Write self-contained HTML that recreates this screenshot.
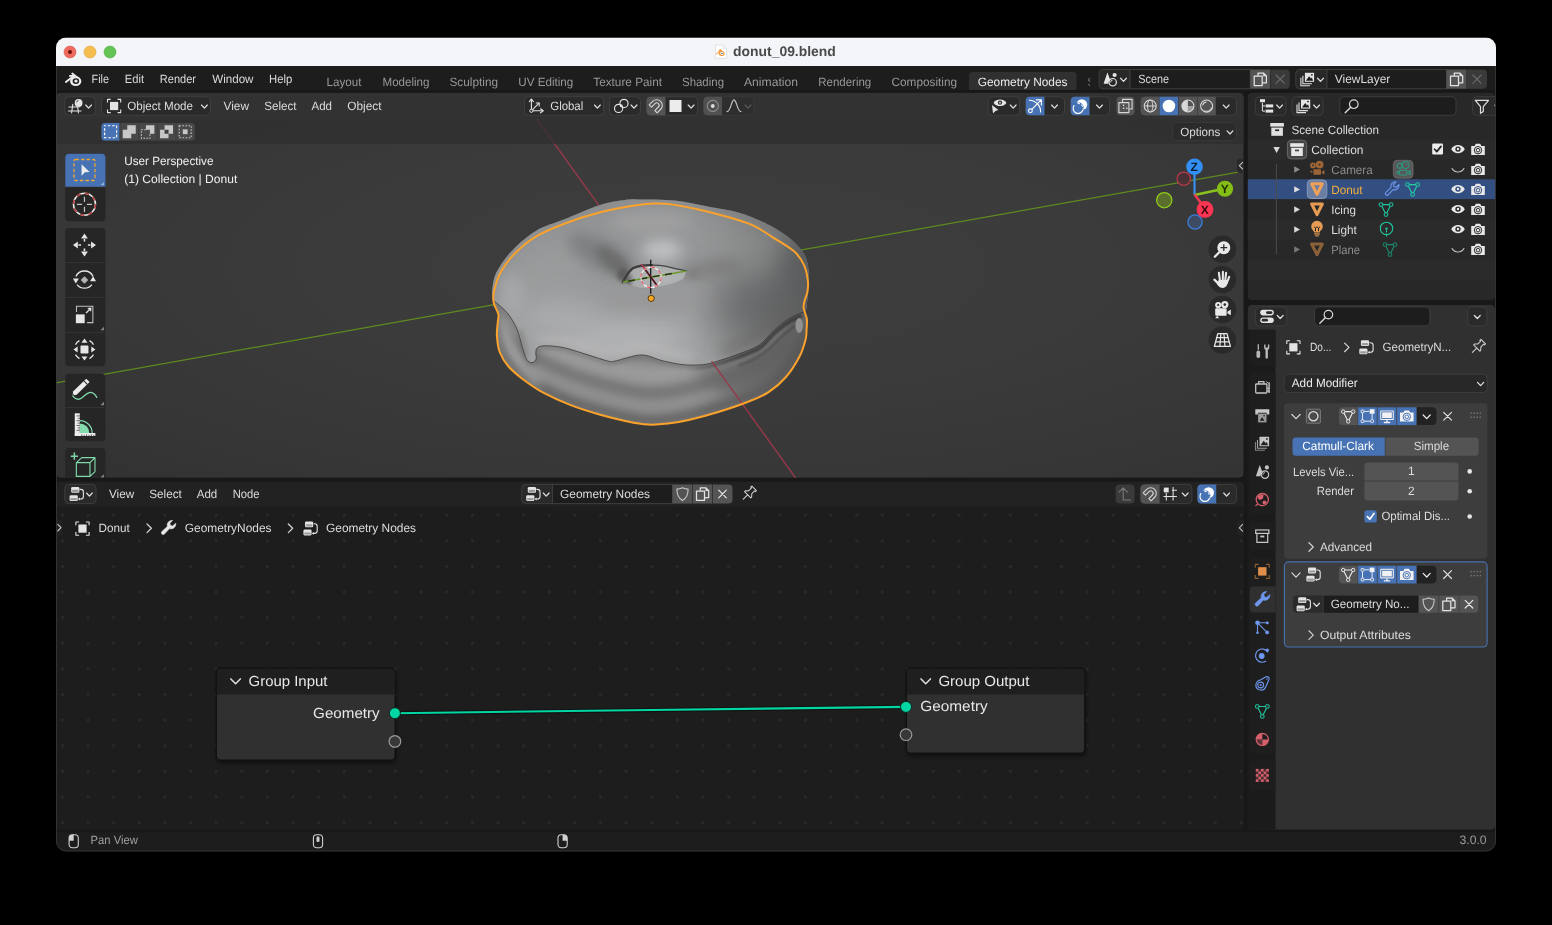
<!DOCTYPE html>
<html><head><meta charset="utf-8"><title>donut_09.blend</title>
<style>
html,body{margin:0;padding:0;background:#000;}
body{width:1552px;height:925px;overflow:hidden;}
svg{display:block;font-family:"Liberation Sans", sans-serif;will-change:transform;}
text{white-space:pre;}
</style></head>
<body>
<svg width="1552" height="925" viewBox="0 0 1552 925" text-rendering="geometricPrecision">
<defs>
<clipPath id="winclip"><rect x="56" y="37.5" width="1440" height="814.0" rx="10"/></clipPath>
<clipPath id="sclip"><rect x="1086" y="70" width="4.2" height="20"/></clipPath>
<clipPath id="vclip"><rect x="56" y="92.7" width="1187.7" height="385.1" rx="5"/></clipPath>
<radialGradient id="vgrad" cx="0.55" cy="0.45" r="0.75"><stop offset="0" stop-color="#3e3e3e"/><stop offset="0.45" stop-color="#3b3b3b"/><stop offset="0.8" stop-color="#363636"/><stop offset="1" stop-color="#323232"/></radialGradient>
<clipPath id="dclip"><path d="M654.0,203.5 C659.6,203.2 661.1,203.1 668.1,204.0 C675.1,204.9 686.8,207.0 696.2,209.0 C705.6,211.0 714.9,213.3 724.3,216.0 C733.7,218.7 744.2,221.5 752.4,225.1 C760.6,228.7 766.5,233.4 773.5,237.8 C780.5,242.2 789.5,247.1 794.6,251.8 C799.8,256.5 802.2,261.0 804.4,265.9 C806.6,270.8 807.4,276.9 807.9,281.3 C808.4,285.7 807.9,288.9 807.4,292.0 C806.9,295.1 805.5,297.1 804.9,299.7 C804.3,302.3 803.3,304.6 803.6,307.8 C803.9,311.0 806.3,315.1 806.8,318.6 C807.3,322.1 806.8,325.5 806.6,329.0 C806.4,332.5 806.8,334.9 805.6,339.6 C804.4,344.3 802.6,350.8 799.3,357.0 C796.0,363.2 791.1,371.1 786.0,377.0 C780.9,382.9 775.0,388.0 768.6,392.2 C762.2,396.4 755.7,398.7 747.4,402.0 C739.1,405.3 728.6,408.8 719.0,411.8 C709.4,414.8 698.3,417.8 689.8,419.8 C681.3,421.8 675.0,422.8 668.0,423.6 C661.0,424.4 654.8,425.0 648.0,424.6 C641.2,424.2 635.6,423.2 627.5,421.5 C619.4,419.8 608.8,417.2 599.4,414.5 C590.0,411.8 580.7,409.0 571.3,405.4 C561.9,401.8 551.4,397.1 543.2,392.7 C535.0,388.2 528.1,383.1 522.2,378.7 C516.4,374.2 511.9,370.4 508.1,366.0 C504.4,361.6 501.6,357.1 499.7,352.0 C497.8,346.9 497.2,340.1 496.9,335.1 C496.6,330.1 497.6,325.5 497.8,322.0 C498.0,318.5 499.0,317.2 498.3,314.0 C497.6,310.8 494.5,306.8 493.8,303.0 C493.1,299.2 492.8,296.4 494.0,291.2 C495.2,285.9 497.6,277.8 501.1,271.5 C504.6,265.2 509.2,259.1 515.1,253.2 C521.0,247.3 528.0,241.3 536.2,236.4 C544.4,231.5 553.8,227.7 564.3,223.7 C574.8,219.7 587.7,215.5 599.4,212.5 C611.1,209.5 625.5,207.0 634.6,205.5 C643.7,204.0 648.4,203.8 654.0,203.5 Z"/></clipPath>
<clipPath id="iclip"><path d="M492.6,300.0 C492.6,298.1 491.7,293.1 492.4,288.4 C493.1,283.6 493.6,277.8 496.9,271.5 C500.2,265.2 505.7,257.2 512.3,250.4 C518.8,243.6 527.5,235.9 536.2,230.7 C544.9,225.5 553.8,223.6 564.3,219.3 C574.8,215.1 589.1,208.4 599.4,205.2 C609.7,201.9 619.3,200.8 626.1,199.8 C632.9,198.8 631.9,199.3 640.0,199.4 C648.1,199.5 663.3,199.2 675.0,200.5 C686.7,201.8 699.4,204.9 710.0,206.9 C720.6,208.9 729.0,209.7 738.4,212.5 C747.8,215.3 758.3,219.7 766.5,223.7 C774.7,227.7 781.6,231.9 787.5,236.4 C793.4,240.9 798.2,245.8 801.6,250.4 C805.0,255.0 806.4,258.9 807.6,264.0 C808.8,269.1 808.6,276.0 808.6,281.3 C808.6,286.6 808.0,291.1 807.6,296.0 C807.2,300.9 806.3,308.5 806.0,311.0 C804.8,311.5 801.9,312.6 798.8,314.0 C795.7,315.4 791.7,316.9 787.5,319.7 C783.3,322.5 778.2,326.7 773.5,330.9 C768.8,335.1 765.2,341.1 759.4,345.0 C753.5,348.9 746.1,351.2 738.4,354.1 C730.7,357.0 719.4,360.7 713.1,362.5 C706.8,364.3 705.5,364.5 700.4,364.9 C695.2,365.2 688.8,365.4 682.2,364.6 C675.7,363.9 666.7,361.8 661.1,360.4 C655.5,359.0 652.3,356.9 648.6,356.0 C644.9,355.1 642.3,354.8 638.8,355.1 C635.3,355.4 631.7,356.6 627.5,357.6 C623.3,358.7 617.0,360.9 613.5,361.4 C610.0,361.9 611.2,361.9 606.5,360.7 C601.8,359.5 592.4,356.2 585.4,354.1 C578.4,352.0 570.9,349.2 564.3,347.8 C557.7,346.4 550.5,345.8 546.0,345.8 C541.5,345.8 539.3,346.4 537.6,347.6 C535.9,348.8 536.0,351.1 535.8,353.0 C535.6,354.9 536.8,357.4 536.2,359.0 C535.6,360.6 533.6,362.7 532.0,362.7 C530.4,362.7 528.0,361.7 526.4,359.0 C524.8,356.3 523.9,351.5 522.2,346.4 C520.6,341.2 518.9,333.5 516.5,328.1 C514.1,322.7 511.1,317.9 508.1,314.0 C505.1,310.1 501.1,306.9 498.5,304.6 C495.9,302.3 493.6,300.8 492.6,300.0 Z"/></clipPath>
<clipPath id="hclip"><path d="M622.9,282.1 C623.7,280.7 626.0,276.2 627.7,273.9 C629.4,271.6 630.6,269.7 632.9,268.3 C635.2,266.9 638.3,266.2 641.5,265.7 C644.7,265.2 648.0,265.0 651.9,265.1 C655.8,265.2 660.6,265.4 664.9,266.1 C669.2,266.8 674.3,268.4 677.9,269.2 C681.5,270.0 685.1,270.5 686.5,270.8 C685.9,272.2 685.5,277.1 682.6,279.4 C679.7,281.7 674.3,283.3 669.2,284.8 C664.1,286.3 657.0,287.9 651.9,288.4 C646.8,288.9 642.9,288.5 638.9,287.8 C634.9,287.1 630.7,285.3 628.0,284.4 C625.3,283.4 623.8,282.5 622.9,282.1 Z"/></clipPath>
<filter id="b1" x="-150%" y="-150%" width="400%" height="400%"><feGaussianBlur stdDeviation="0.7"/></filter>
<filter id="b1h" x="-150%" y="-150%" width="400%" height="400%"><feGaussianBlur stdDeviation="1.3"/></filter>
<filter id="b2" x="-150%" y="-150%" width="400%" height="400%"><feGaussianBlur stdDeviation="2"/></filter>
<filter id="b4" x="-150%" y="-150%" width="400%" height="400%"><feGaussianBlur stdDeviation="4"/></filter>
<filter id="b7" x="-150%" y="-150%" width="400%" height="400%"><feGaussianBlur stdDeviation="7"/></filter>
<filter id="b12" x="-150%" y="-150%" width="400%" height="400%"><feGaussianBlur stdDeviation="12"/></filter>
<filter id="b18" x="-150%" y="-150%" width="400%" height="400%"><feGaussianBlur stdDeviation="18"/></filter>
<linearGradient id="doughg" x1="0" y1="0" x2="0" y2="1"><stop offset="0" stop-color="#7c7c7c"/><stop offset="0.35" stop-color="#929292"/><stop offset="0.55" stop-color="#7f7f7f"/><stop offset="0.78" stop-color="#8e8e8e"/><stop offset="1" stop-color="#747474"/></linearGradient>
<linearGradient id="icingg" x1="0" y1="0" x2="0.15" y2="1"><stop offset="0" stop-color="#8f9091"/><stop offset="0.45" stop-color="#979899"/><stop offset="1" stop-color="#a3a4a5"/></linearGradient>
<linearGradient id="shg" gradientUnits="userSpaceOnUse" x1="684" y1="0" x2="740" y2="0"><stop offset="0" stop-color="#403e3e" stop-opacity="0"/><stop offset="1" stop-color="#403e3e" stop-opacity="1"/></linearGradient>
<linearGradient id="rdark" gradientUnits="userSpaceOnUse" x1="690" y1="0" x2="812" y2="0"><stop offset="0" stop-color="#000" stop-opacity="0"/><stop offset="1" stop-color="#000" stop-opacity="0.22"/></linearGradient>
<clipPath id="bodyclip"><path d="M654.0,203.5 C659.6,203.2 661.1,203.1 668.1,204.0 C675.1,204.9 686.8,207.0 696.2,209.0 C705.6,211.0 714.9,213.3 724.3,216.0 C733.7,218.7 744.2,221.5 752.4,225.1 C760.6,228.7 766.5,233.4 773.5,237.8 C780.5,242.2 789.5,247.1 794.6,251.8 C799.8,256.5 802.2,261.0 804.4,265.9 C806.6,270.8 807.4,276.9 807.9,281.3 C808.4,285.7 807.9,288.9 807.4,292.0 C806.9,295.1 805.5,297.1 804.9,299.7 C804.3,302.3 803.3,304.6 803.6,307.8 C803.9,311.0 806.3,315.1 806.8,318.6 C807.3,322.1 806.8,325.5 806.6,329.0 C806.4,332.5 806.8,334.9 805.6,339.6 C804.4,344.3 802.6,350.8 799.3,357.0 C796.0,363.2 791.1,371.1 786.0,377.0 C780.9,382.9 775.0,388.0 768.6,392.2 C762.2,396.4 755.7,398.7 747.4,402.0 C739.1,405.3 728.6,408.8 719.0,411.8 C709.4,414.8 698.3,417.8 689.8,419.8 C681.3,421.8 675.0,422.8 668.0,423.6 C661.0,424.4 654.8,425.0 648.0,424.6 C641.2,424.2 635.6,423.2 627.5,421.5 C619.4,419.8 608.8,417.2 599.4,414.5 C590.0,411.8 580.7,409.0 571.3,405.4 C561.9,401.8 551.4,397.1 543.2,392.7 C535.0,388.2 528.1,383.1 522.2,378.7 C516.4,374.2 511.9,370.4 508.1,366.0 C504.4,361.6 501.6,357.1 499.7,352.0 C497.8,346.9 497.2,340.1 496.9,335.1 C496.6,330.1 497.6,325.5 497.8,322.0 C498.0,318.5 499.0,317.2 498.3,314.0 C497.6,310.8 494.5,306.8 493.8,303.0 C493.1,299.2 492.8,296.4 494.0,291.2 C495.2,285.9 497.6,277.8 501.1,271.5 C504.6,265.2 509.2,259.1 515.1,253.2 C521.0,247.3 528.0,241.3 536.2,236.4 C544.4,231.5 553.8,227.7 564.3,223.7 C574.8,219.7 587.7,215.5 599.4,212.5 C611.1,209.5 625.5,207.0 634.6,205.5 C643.7,204.0 648.4,203.8 654.0,203.5 Z"/><path d="M492.6,300.0 C492.6,298.1 491.7,293.1 492.4,288.4 C493.1,283.6 493.6,277.8 496.9,271.5 C500.2,265.2 505.7,257.2 512.3,250.4 C518.8,243.6 527.5,235.9 536.2,230.7 C544.9,225.5 553.8,223.6 564.3,219.3 C574.8,215.1 589.1,208.4 599.4,205.2 C609.7,201.9 619.3,200.8 626.1,199.8 C632.9,198.8 631.9,199.3 640.0,199.4 C648.1,199.5 663.3,199.2 675.0,200.5 C686.7,201.8 699.4,204.9 710.0,206.9 C720.6,208.9 729.0,209.7 738.4,212.5 C747.8,215.3 758.3,219.7 766.5,223.7 C774.7,227.7 781.6,231.9 787.5,236.4 C793.4,240.9 798.2,245.8 801.6,250.4 C805.0,255.0 806.4,258.9 807.6,264.0 C808.8,269.1 808.6,276.0 808.6,281.3 C808.6,286.6 808.0,291.1 807.6,296.0 C807.2,300.9 806.3,308.5 806.0,311.0 C804.8,311.5 801.9,312.6 798.8,314.0 C795.7,315.4 791.7,316.9 787.5,319.7 C783.3,322.5 778.2,326.7 773.5,330.9 C768.8,335.1 765.2,341.1 759.4,345.0 C753.5,348.9 746.1,351.2 738.4,354.1 C730.7,357.0 719.4,360.7 713.1,362.5 C706.8,364.3 705.5,364.5 700.4,364.9 C695.2,365.2 688.8,365.4 682.2,364.6 C675.7,363.9 666.7,361.8 661.1,360.4 C655.5,359.0 652.3,356.9 648.6,356.0 C644.9,355.1 642.3,354.8 638.8,355.1 C635.3,355.4 631.7,356.6 627.5,357.6 C623.3,358.7 617.0,360.9 613.5,361.4 C610.0,361.9 611.2,361.9 606.5,360.7 C601.8,359.5 592.4,356.2 585.4,354.1 C578.4,352.0 570.9,349.2 564.3,347.8 C557.7,346.4 550.5,345.8 546.0,345.8 C541.5,345.8 539.3,346.4 537.6,347.6 C535.9,348.8 536.0,351.1 535.8,353.0 C535.6,354.9 536.8,357.4 536.2,359.0 C535.6,360.6 533.6,362.7 532.0,362.7 C530.4,362.7 528.0,361.7 526.4,359.0 C524.8,356.3 523.9,351.5 522.2,346.4 C520.6,341.2 518.9,333.5 516.5,328.1 C514.1,322.7 511.1,317.9 508.1,314.0 C505.1,310.1 501.1,306.9 498.5,304.6 C495.9,302.3 493.6,300.8 492.6,300.0 Z"/></clipPath>
<clipPath id="nclip"><rect x="56" y="481.5" width="1188" height="348.29999999999995" rx="5"/></clipPath>
<pattern id="dots" x="61.1" y="513.8" width="25.62" height="25.62" patternUnits="userSpaceOnUse"><rect x="0" y="0" width="2.6" height="2.6" rx="0.6" fill="#2b2b2b"/></pattern>
<filter id="nshadow" x="-10%" y="-10%" width="120%" height="130%"><feGaussianBlur stdDeviation="2.5"/></filter>
<clipPath id="oclip"><rect x="1247.6" y="92.7" width="247.60000000000014" height="207.7" rx="5"/></clipPath>
<clipPath id="pclip"><rect x="1247.6" y="304.7" width="247.60000000000014" height="525.0999999999999" rx="5"/></clipPath>
</defs>
<rect width="1552" height="925" fill="#000"/>
<g clip-path="url(#winclip)">
<rect x="56.00" y="37.50" width="1440.00" height="814.00" fill="#181818" />
<rect x="56.00" y="37.50" width="1440.00" height="28.50" fill="#f3f5f8" />
<circle cx="70.00" cy="52.00" r="6.00" fill="#ee6a5f" stroke="#d8564c" stroke-width="0.6" />
<circle cx="70.00" cy="52.00" r="2.00" fill="#6d1008" />
<circle cx="90.00" cy="52.00" r="6.00" fill="#f5bd4f" stroke="#dea23a" stroke-width="0.6" />
<circle cx="110.00" cy="52.00" r="6.00" fill="#61c454" stroke="#4fac43" stroke-width="0.6" />
<text x="733.10" y="56.00" font-size="13.8" fill="#4a4a4a" font-weight="bold" textLength="102.70" lengthAdjust="spacingAndGlyphs" >donut_09.blend</text>
<path d="M715.5,45.0 h7.5 l3.5,3.5 v9.8 h-11 z" fill="#ffffff" stroke="#dcdde0" stroke-width="0.8"/>
<path d="M723,45.0 v3.5 h3.5" fill="#eceef0" stroke="#dcdde0" stroke-width="0.6"/>
<g transform="translate(720.6,52.8) scale(0.52)"><path d="M-7.6,2.2 L0.2,-3.9 L-3.6,-3.9 M-1.2,-6.3 L3.4,-2.6" stroke="#ef9a3d" stroke-width="2" fill="none" stroke-linecap="round"/><ellipse cx="2.2" cy="1.4" rx="5.6" ry="4.9" fill="#ef9a3d"/><ellipse cx="2.4" cy="1.3" rx="3.2" ry="2.8" fill="#fff"/><ellipse cx="2.5" cy="1.2" rx="1.7" ry="1.5" fill="#3f6db5"/></g>
<rect x="56.00" y="66.00" width="1440.00" height="24.00" fill="#1d1d1d" />
<g transform="translate(73.50,79.80) scale(1.0)" ><path d="M-7.6,2.2 L0.2,-3.9 L-3.6,-3.9 M-1.2,-6.3 L3.4,-2.6" stroke="#ececec" stroke-width="1.9" fill="none" stroke-linecap="round" stroke-linejoin="round"/><ellipse cx="2.2" cy="1.4" rx="5.6" ry="4.9" fill="#ececec"/><ellipse cx="2.4" cy="1.3" rx="3.3" ry="2.9" fill="#1d1d1d"/><ellipse cx="2.5" cy="1.2" rx="1.7" ry="1.55" fill="#ececec"/></g>
<text x="91.50" y="83.00" font-size="12" fill="#dcdcdc" textLength="17.50" lengthAdjust="spacingAndGlyphs" >File</text>
<text x="124.75" y="83.00" font-size="12" fill="#dcdcdc" textLength="19.25" lengthAdjust="spacingAndGlyphs" >Edit</text>
<text x="159.75" y="83.00" font-size="12" fill="#dcdcdc" textLength="36.25" lengthAdjust="spacingAndGlyphs" >Render</text>
<text x="212.25" y="83.00" font-size="12" fill="#dcdcdc" textLength="41.25" lengthAdjust="spacingAndGlyphs" >Window</text>
<text x="269.00" y="83.00" font-size="12" fill="#dcdcdc" textLength="23.25" lengthAdjust="spacingAndGlyphs" >Help</text>
<path d="M973.00,72.00 H1072.50 A4,4 0 0 1 1076.50,76.00 V90.00 H969.00 V76.00 A4,4 0 0 1 973.00,72.00 Z" fill="#303030" />
<text x="326.50" y="85.75" font-size="12" fill="#989898" textLength="35.00" lengthAdjust="spacingAndGlyphs" >Layout</text>
<text x="382.50" y="85.75" font-size="12" fill="#989898" textLength="47.00" lengthAdjust="spacingAndGlyphs" >Modeling</text>
<text x="449.50" y="85.75" font-size="12" fill="#989898" textLength="48.50" lengthAdjust="spacingAndGlyphs" >Sculpting</text>
<text x="518.25" y="85.75" font-size="12" fill="#989898" textLength="55.00" lengthAdjust="spacingAndGlyphs" >UV Editing</text>
<text x="593.25" y="85.75" font-size="12" fill="#989898" textLength="68.75" lengthAdjust="spacingAndGlyphs" >Texture Paint</text>
<text x="682.00" y="85.75" font-size="12" fill="#989898" textLength="42.00" lengthAdjust="spacingAndGlyphs" >Shading</text>
<text x="744.00" y="85.75" font-size="12" fill="#989898" textLength="54.00" lengthAdjust="spacingAndGlyphs" >Animation</text>
<text x="818.25" y="85.75" font-size="12" fill="#989898" textLength="53.00" lengthAdjust="spacingAndGlyphs" >Rendering</text>
<text x="891.50" y="85.75" font-size="12" fill="#989898" textLength="65.50" lengthAdjust="spacingAndGlyphs" >Compositing</text>
<text x="977.75" y="85.75" font-size="12" fill="#ececec" textLength="89.75" lengthAdjust="spacingAndGlyphs" >Geometry Nodes</text>
<text x="1087.20" y="85.75" font-size="12" fill="#777" clip-path="url(#sclip)">S</text>
<path d="M1103.00,69.50 H1130.00 V88.75 H1103.00 A4,4 0 0 1 1099.00,84.75 V73.50 A4,4 0 0 1 1103.00,69.50 Z" fill="#282828" stroke="#3d3d3d" stroke-width="1" />
<g transform="translate(1110.00,79.20) scale(1.0)" ><path d="M-6.4,4.6 L-2.6,-6.6 L0.2,0.6 A4.4,4.4 0 0 0 -1.8,4.6 Z" fill="#e4e4e4"/><circle cx="4.6" cy="-4.2" r="2.1" fill="#e4e4e4"/><circle cx="2.7" cy="3" r="3.7" fill="none" stroke="#e4e4e4" stroke-width="1.2"/><path d="M0.6,3.2 A2.2,2.2 0 0 1 2.6,0.9" fill="none" stroke="#e4e4e4" stroke-width="0.9"/></g>
<path d="M1120.60,78.25 L1123.50,81.35 L1126.40,78.25" fill="none" stroke="#e0e0e0" stroke-width="1.25" stroke-linecap="round" stroke-linejoin="round"/>
<rect x="1130.00" y="69.50" width="120.25" height="19.25" fill="#1d1d1d" stroke="#3d3d3d" stroke-width="1" />
<text x="1138.25" y="83.00" font-size="12" fill="#dcdcdc" textLength="30.75" lengthAdjust="spacingAndGlyphs" >Scene</text>
<rect x="1250.25" y="69.50" width="20.00" height="19.25" fill="#545454" />
<g transform="translate(1260.20,79.20) scale(1.0)" ><path d="M-2.2,-3.2 V-6.2 H3.2 L6.2,-3.2 V3.6 H2.2" fill="none" stroke="#e4e4e4" stroke-width="1.25" stroke-linejoin="round"/><path d="M3,-6.2 V-3 H6.2 Z" fill="#e4e4e4"/><path d="M-6,-3 H2 V6.3 H-6 Z" fill="none" stroke="#e4e4e4" stroke-width="1.25" stroke-linejoin="round"/></g>
<path d="M1270.75,69.50 H1285.75 A4,4 0 0 1 1289.75,73.50 V84.75 A4,4 0 0 1 1285.75,88.75 H1270.75 V69.50 Z" fill="#3a3a3a" />
<path d="M1276.00,75.00 L1284.40,83.40 M1284.40,75.00 L1276.00,83.40" stroke="#6a6a6a" stroke-width="1.1" fill="none" stroke-linecap="round"/>
<path d="M1299.75,69.50 H1327.00 V88.75 H1299.75 A4,4 0 0 1 1295.75,84.75 V73.50 A4,4 0 0 1 1299.75,69.50 Z" fill="#282828" stroke="#3d3d3d" stroke-width="1" />
<g transform="translate(1307.50,79.20) scale(1.0)" ><path d="M-6.6,-1.4 V6.6 H2.4" fill="none" stroke="#e4e4e4" stroke-width="1.1"/><path d="M-4.6,-3.4 V4.6 H4.4" fill="none" stroke="#e4e4e4" stroke-width="1.1"/><rect x="-2.6" y="-6.4" width="9.2" height="9" fill="#e4e4e4"/><path d="M-1.6,1.6 L1.6,-3 L3.4,-0.6 L4.4,-1.8 L5.6,1.6 Z" fill="#1d1d1d"/><circle cx="4.4" cy="-4.4" r="0.9" fill="#1d1d1d"/></g>
<path d="M1317.60,78.25 L1320.50,81.35 L1323.40,78.25" fill="none" stroke="#e0e0e0" stroke-width="1.25" stroke-linecap="round" stroke-linejoin="round"/>
<rect x="1327.00" y="69.50" width="119.50" height="19.25" fill="#1d1d1d" stroke="#3d3d3d" stroke-width="1" />
<text x="1334.75" y="83.00" font-size="12" fill="#dcdcdc" textLength="55.50" lengthAdjust="spacingAndGlyphs" >ViewLayer</text>
<rect x="1446.50" y="69.50" width="20.00" height="19.25" fill="#545454" />
<g transform="translate(1456.50,79.20) scale(1.0)" ><path d="M-2.2,-3.2 V-6.2 H3.2 L6.2,-3.2 V3.6 H2.2" fill="none" stroke="#e4e4e4" stroke-width="1.25" stroke-linejoin="round"/><path d="M3,-6.2 V-3 H6.2 Z" fill="#e4e4e4"/><path d="M-6,-3 H2 V6.3 H-6 Z" fill="none" stroke="#e4e4e4" stroke-width="1.25" stroke-linejoin="round"/></g>
<path d="M1467.00,69.50 H1483.00 A4,4 0 0 1 1487.00,73.50 V84.75 A4,4 0 0 1 1483.00,88.75 H1467.00 V69.50 Z" fill="#3a3a3a" />
<path d="M1472.80,75.00 L1481.20,83.40 M1481.20,75.00 L1472.80,83.40" stroke="#6a6a6a" stroke-width="1.1" fill="none" stroke-linecap="round"/>
<g clip-path="url(#vclip)">
<rect x="56.00" y="92.70" width="1187.70" height="385.10" fill="url(#vgrad)" />
<line x1="56.00" y1="382.84" x2="500.00" y2="303.68" stroke="#5f8a1f" stroke-width="1.3" />
<line x1="796.00" y1="250.90" x2="1244.00" y2="171.02" stroke="#5f8a1f" stroke-width="1.3" />
<line x1="536.50" y1="118.75" x2="600.50" y2="207.70" stroke="#94394a" stroke-width="1.4" />
<g clip-path="url(#dclip)">
<rect x="480.00" y="195.00" width="340.00" height="235.00" fill="#878787" />
<path d="M493.6,326.0 C494.7,329.7 497.8,342.0 500.3,348.0 C502.8,354.0 505.0,357.6 508.6,362.0 C512.2,366.4 516.3,370.2 522.0,374.7 C527.7,379.1 534.8,384.2 543.0,388.7 C551.2,393.1 561.7,397.8 571.0,401.4 C580.3,405.0 589.6,407.8 599.0,410.5 C608.4,413.2 619.3,415.8 627.5,417.5 C635.7,419.2 641.2,420.2 648.0,420.6 C654.8,421.0 661.2,420.5 668.0,419.6 C674.8,418.7 680.8,417.5 689.0,415.4 C697.2,413.3 707.7,410.1 717.0,407.0 C726.3,403.9 736.8,400.3 745.0,397.0 C753.2,393.7 760.3,391.2 766.5,387.0 C772.7,382.8 777.4,377.8 782.4,372.0 C787.4,366.2 792.6,358.7 796.4,352.0 C800.2,345.3 803.9,335.3 805.4,332.0" fill="none" stroke="#626262" stroke-width="11" filter="url(#b4)" stroke-opacity="0.9" stroke-linecap="round"/>
<path d="M495.9,311.0 C497.0,314.7 500.1,327.0 502.6,333.0 C505.1,339.0 507.6,342.6 510.9,347.0 C514.1,351.4 516.6,355.2 522.0,359.7 C527.4,364.1 534.8,369.2 543.0,373.7 C551.2,378.1 561.7,382.8 571.0,386.4 C580.3,390.0 589.6,392.8 599.0,395.5 C608.4,398.2 619.3,400.8 627.5,402.5 C635.7,404.2 641.2,405.2 648.0,405.6 C654.8,406.0 661.2,405.5 668.0,404.6 C674.8,403.7 680.8,402.5 689.0,400.4 C697.2,398.3 707.7,395.1 717.0,392.0 C726.3,388.9 736.8,385.3 745.0,382.0 C753.2,378.7 760.6,376.2 766.5,372.0 C772.4,367.8 775.5,362.8 780.1,357.0 C784.8,351.2 790.3,343.7 794.1,337.0 C798.0,330.3 801.6,320.3 803.1,317.0" fill="none" stroke="#979797" stroke-width="10" filter="url(#b4)" stroke-opacity="0.65" stroke-linecap="round"/>
<path d="M497.8,298.0 C498.9,301.7 502.0,314.0 504.5,320.0 C507.0,326.0 509.9,329.6 512.8,334.0 C515.7,338.4 517.0,342.2 522.0,346.7 C527.0,351.1 534.8,356.2 543.0,360.7 C551.2,365.1 561.7,369.8 571.0,373.4 C580.3,377.0 589.6,379.8 599.0,382.5 C608.4,385.2 619.3,387.8 627.5,389.5 C635.7,391.2 641.2,392.2 648.0,392.6 C654.8,393.0 661.2,392.5 668.0,391.6 C674.8,390.7 680.8,389.5 689.0,387.4 C697.2,385.3 707.7,382.1 717.0,379.0 C726.3,375.9 736.8,372.3 745.0,369.0 C753.2,365.7 761.0,363.2 766.5,359.0 C772.0,354.8 773.9,349.8 778.2,344.0 C782.5,338.2 788.4,330.7 792.2,324.0 C796.0,317.3 799.7,307.3 801.2,304.0" fill="none" stroke="#717171" stroke-width="10" filter="url(#b4)" stroke-opacity="0.8" stroke-linecap="round"/>
<path d="M500.5,280.0 C501.6,283.7 504.7,296.0 507.2,302.0 C509.7,308.0 513.0,311.6 515.5,316.0 C518.0,320.4 517.4,324.2 522.0,328.7 C526.6,333.1 534.8,338.2 543.0,342.7 C551.2,347.1 561.7,351.8 571.0,355.4 C580.3,359.0 589.6,361.8 599.0,364.5 C608.4,367.2 619.3,369.8 627.5,371.5 C635.7,373.2 641.2,374.2 648.0,374.6 C654.8,375.0 661.2,374.5 668.0,373.6 C674.8,372.7 680.8,371.5 689.0,369.4 C697.2,367.3 707.7,364.1 717.0,361.0 C726.3,357.9 736.8,354.3 745.0,351.0 C753.2,347.7 761.4,345.2 766.5,341.0 C771.6,336.8 771.7,331.8 775.5,326.0 C779.3,320.2 785.7,312.7 789.5,306.0 C793.3,299.3 797.0,289.3 798.5,286.0" fill="none" stroke="#9e9e9e" stroke-width="18" filter="url(#b4)" stroke-opacity="0.85" stroke-linecap="round"/>
<path d="M502,318 C506,345 520,368 540,384" fill="none" stroke="#a6a6a6" stroke-width="9" filter="url(#b4)" stroke-opacity="0.7"/>
<path d="M497,312 C498,340 504,356 514,370" fill="none" stroke="#7a7a7a" stroke-width="4" filter="url(#b2)" stroke-opacity="0.7"/>
<path d="M690,372 C735,366 775,344 806,318 L812,345 C800,372 770,392 730,398 Z" fill="#6e6e6e" filter="url(#b7)" fill-opacity="0.8"/>
<path d="M799.5,314.0 C797.5,314.9 791.8,316.9 787.5,319.7 C783.2,322.5 778.2,326.7 773.5,330.9 C768.8,335.1 765.2,341.1 759.4,345.0 C753.5,348.9 746.1,351.2 738.4,354.1 C730.7,357.0 719.4,360.7 713.1,362.5 C706.8,364.3 704.9,364.5 700.4,364.9 C695.9,365.3 688.4,365.0 686.0,365.0" fill="none" stroke="url(#shg)" stroke-width="3.8" filter="url(#b1h)" stroke-opacity="0.9" stroke-linecap="round" transform="translate(0.5,2.6)"/>
<path d="M800.0,316.0 C798.3,317.0 793.7,319.3 790.0,322.0 C786.3,324.7 782.0,328.3 778.0,332.0 C774.0,335.7 770.3,340.5 766.0,344.0 C761.7,347.5 756.7,350.5 752.0,353.0 C747.3,355.5 740.3,358.0 738.0,359.0" fill="none" stroke="#504e4e" stroke-width="2.4" filter="url(#b1h)" stroke-opacity="0.65" stroke-linecap="round" transform="translate(1.4,6.4)"/>
<path d="M806.0,311.0 C804.8,311.5 801.9,312.6 798.8,314.0 C795.7,315.4 791.7,316.9 787.5,319.7 C783.3,322.5 778.2,326.7 773.5,330.9 C768.8,335.1 765.2,341.1 759.4,345.0 C753.5,348.9 746.1,351.2 738.4,354.1 C730.7,357.0 719.4,360.7 713.1,362.5 C706.8,364.3 705.5,364.5 700.4,364.9 C695.2,365.2 688.8,365.4 682.2,364.6 C675.7,363.9 666.7,361.8 661.1,360.4 C655.5,359.0 652.3,356.9 648.6,356.0 C644.9,355.1 642.3,354.8 638.8,355.1 C635.3,355.4 631.7,356.6 627.5,357.6 C623.3,358.7 617.0,360.9 613.5,361.4 C610.0,361.9 611.2,361.9 606.5,360.7 C601.8,359.5 592.4,356.2 585.4,354.1 C578.4,352.0 570.9,349.2 564.3,347.8 C557.7,346.4 550.5,345.8 546.0,345.8 C541.5,345.8 539.3,346.4 537.6,347.6 C535.9,348.8 536.0,351.1 535.8,353.0 C535.6,354.9 536.8,357.4 536.2,359.0 C535.6,360.6 533.6,362.7 532.0,362.7 C530.4,362.7 528.0,361.7 526.4,359.0 C524.8,356.3 523.9,351.5 522.2,346.4 C520.6,341.2 518.9,333.5 516.5,328.1 C514.1,322.7 511.1,317.9 508.1,314.0 C505.1,310.1 501.1,306.9 498.5,304.6 C495.9,302.3 493.6,300.8 492.6,300.0" fill="none" stroke="#5a5a5a" stroke-width="3" filter="url(#b2)" stroke-opacity="0.55" transform="translate(0,1.5)"/>
</g>
<g clip-path="url(#iclip)">
<rect x="480.00" y="190.00" width="340.00" height="190.00" fill="url(#icingg)" />
<path d="M492.6,300.0 C492.6,298.1 491.7,293.1 492.4,288.4 C493.1,283.6 493.6,277.8 496.9,271.5 C500.2,265.2 505.7,257.2 512.3,250.4 C518.8,243.6 527.5,235.9 536.2,230.7 C544.9,225.5 553.8,223.6 564.3,219.3 C574.8,215.1 589.1,208.4 599.4,205.2 C609.7,201.9 619.3,200.8 626.1,199.8 C632.9,198.8 631.9,199.3 640.0,199.4 C648.1,199.5 663.3,199.2 675.0,200.5 C686.7,201.8 699.4,204.9 710.0,206.9 C720.6,208.9 729.0,209.7 738.4,212.5 C747.8,215.3 758.3,219.7 766.5,223.7 C774.7,227.7 781.6,231.9 787.5,236.4 C793.4,240.9 798.2,245.8 801.6,250.4 C805.0,255.0 806.4,258.9 807.6,264.0 C808.8,269.1 808.6,276.0 808.6,281.3 C808.6,286.6 808.0,291.1 807.6,296.0 C807.2,300.9 806.3,308.5 806.0,311.0" fill="none" stroke="#868788" stroke-width="9" filter="url(#b4)" stroke-opacity="0.6"/>
<ellipse cx="800" cy="285" rx="26" ry="52" fill="#6f7071" filter="url(#b12)" fill-opacity="0.9"/>
<ellipse cx="768" cy="308" rx="56" ry="38" fill="#747576" filter="url(#b18)" fill-opacity="0.95"/>
<ellipse cx="560" cy="262" rx="50" ry="16" fill="#a0a1a2" filter="url(#b12)" fill-opacity="0.45" transform="rotate(-24 560 262)"/>
<ellipse cx="735" cy="248" rx="46" ry="14" fill="#a0a1a2" filter="url(#b12)" fill-opacity="0.45" transform="rotate(20 735 248)"/>
<ellipse cx="600" cy="254" rx="36" ry="15" fill="#7a7b7c" filter="url(#b7)" fill-opacity="0.85" transform="rotate(28 600 254)"/>
<ellipse cx="614" cy="262" rx="22" ry="9" fill="#666666" filter="url(#b4)" fill-opacity="0.75" transform="rotate(40 614 262)"/>
<ellipse cx="623" cy="275" rx="6" ry="7" fill="#565656" filter="url(#b2)" fill-opacity="0.8"/>
<ellipse cx="712" cy="268" rx="30" ry="7" fill="#7f8081" filter="url(#b7)" fill-opacity="0.9" transform="rotate(-8 712 268)"/>
<ellipse cx="692" cy="274" rx="7" ry="5" fill="#767676" filter="url(#b4)" fill-opacity="0.8"/>
<ellipse cx="662" cy="250" rx="20" ry="11" fill="#c2c3c4" filter="url(#b7)" fill-opacity="0.95"/>
<ellipse cx="650" cy="222" rx="40" ry="10" fill="#a6a7a8" filter="url(#b7)" fill-opacity="0.7"/>
<ellipse cx="625" cy="338" rx="62" ry="15" fill="#b6b7b8" filter="url(#b12)" fill-opacity="0.95"/>
<ellipse cx="560" cy="318" rx="40" ry="18" fill="#aeafb0" filter="url(#b12)" fill-opacity="0.8"/>
<ellipse cx="512" cy="296" rx="12" ry="22" fill="#aaabac" filter="url(#b7)" fill-opacity="0.8"/>
<ellipse cx="655" cy="300" rx="55" ry="10" fill="#949596" filter="url(#b7)" fill-opacity="0.6"/>
<path d="M540.0,344.0 C544.0,344.2 556.7,344.2 564.3,345.5 C571.9,346.8 578.4,349.5 585.4,351.5 C592.4,353.5 599.5,357.0 606.5,357.5 C613.5,358.0 620.5,355.3 627.5,354.5 C634.5,353.7 641.5,351.9 648.6,352.5 C655.7,353.1 663.1,356.6 670.0,358.0 C676.9,359.4 686.7,360.5 690.0,361.0" fill="none" stroke="#bdbebf" stroke-width="6" filter="url(#b4)" stroke-opacity="0.7" stroke-linecap="round" transform="translate(0,-4.5)"/>
<path d="M520,330 L527,358" fill="none" stroke="#858585" stroke-width="5" filter="url(#b2)" stroke-opacity="0.8"/>
<path d="M720,352 C750,344 775,322 798,306" fill="none" stroke="#757677" stroke-width="12" filter="url(#b7)" stroke-opacity="0.8"/>
</g>
<ellipse cx="799.2" cy="325.4" rx="3.7" ry="7.4" fill="#b4b5b5" filter="url(#b1)"/>
<path d="M806.0,311.0 C804.8,311.5 801.9,312.6 798.8,314.0 C795.7,315.4 791.7,316.9 787.5,319.7 C783.3,322.5 778.2,326.7 773.5,330.9 C768.8,335.1 765.2,341.1 759.4,345.0 C753.5,348.9 746.1,351.2 738.4,354.1 C730.7,357.0 719.4,360.7 713.1,362.5 C706.8,364.3 705.5,364.5 700.4,364.9 C695.2,365.2 688.8,365.4 682.2,364.6 C675.7,363.9 666.7,361.8 661.1,360.4 C655.5,359.0 652.3,356.9 648.6,356.0 C644.9,355.1 642.3,354.8 638.8,355.1 C635.3,355.4 631.7,356.6 627.5,357.6 C623.3,358.7 617.0,360.9 613.5,361.4 C610.0,361.9 611.2,361.9 606.5,360.7 C601.8,359.5 592.4,356.2 585.4,354.1 C578.4,352.0 570.9,349.2 564.3,347.8 C557.7,346.4 550.5,345.8 546.0,345.8 C541.5,345.8 539.3,346.4 537.6,347.6 C535.9,348.8 536.0,351.1 535.8,353.0 C535.6,354.9 536.8,357.4 536.2,359.0 C535.6,360.6 533.6,362.7 532.0,362.7 C530.4,362.7 528.0,361.7 526.4,359.0 C524.8,356.3 523.9,351.5 522.2,346.4 C520.6,341.2 518.9,333.5 516.5,328.1 C514.1,322.7 511.1,317.9 508.1,314.0 C505.1,310.1 501.1,306.9 498.5,304.6 C495.9,302.3 493.6,300.8 492.6,300.0" fill="none" stroke="#403e3e" stroke-width="1.0" stroke-linejoin="round" stroke-opacity="0.85"/>
<rect x="640.00" y="195.00" width="175.00" height="235.00" fill="url(#rdark)" clip-path="url(#bodyclip)"/>
<path d="M622.9,282.1 C623.7,280.7 626.0,276.2 627.7,273.9 C629.4,271.6 630.6,269.7 632.9,268.3 C635.2,266.9 638.3,266.2 641.5,265.7 C644.7,265.2 648.0,265.0 651.9,265.1 C655.8,265.2 660.6,265.4 664.9,266.1 C669.2,266.8 674.3,268.4 677.9,269.2 C681.5,270.0 685.1,270.5 686.5,270.8 C685.9,272.2 685.5,277.1 682.6,279.4 C679.7,281.7 674.3,283.3 669.2,284.8 C664.1,286.3 657.0,287.9 651.9,288.4 C646.8,288.9 642.9,288.5 638.9,287.8 C634.9,287.1 630.7,285.3 628.0,284.4 C625.3,283.4 623.8,282.5 622.9,282.1 Z" fill="#acadae" />
<g clip-path="url(#hclip)">
<ellipse cx="625" cy="280" rx="7" ry="8" fill="#6a6a6a" filter="url(#b2)"/>
<ellipse cx="662" cy="277" rx="20" ry="6" fill="#b4b5b6" filter="url(#b4)"/>
</g>
<path d="M622.9,282.1 C623.7,280.7 626.0,276.2 627.7,273.9 C629.4,271.6 630.6,269.7 632.9,268.3 C635.2,266.9 638.3,266.2 641.5,265.7 C644.7,265.2 648.0,265.0 651.9,265.1 C655.8,265.2 660.6,265.4 664.9,266.1 C669.2,266.8 674.3,268.4 677.9,269.2 C681.5,270.0 685.1,270.5 686.5,270.8" fill="none" stroke="#444" stroke-width="1.2" stroke-linecap="round"/>
<path d="M622.9,282.1 C623.7,280.7 626.0,276.2 627.7,273.9 C629.4,271.6 630.6,269.7 632.9,268.3 C635.2,266.9 638.3,266.2 641.5,265.7 C644.7,265.2 650.2,265.2 651.9,265.1" fill="none" stroke="#3e3e3e" stroke-width="2.4" stroke-linecap="round" filter="url(#b1)"/>
<path d="M686.5,270.8 C685.9,272.2 685.5,277.1 682.6,279.4 C679.7,281.7 674.3,283.3 669.2,284.8 C664.1,286.3 657.0,287.9 651.9,288.4 C646.8,288.9 642.9,288.5 638.9,287.8 C634.9,287.1 630.7,285.3 628.0,284.4 C625.3,283.4 623.8,282.5 622.9,282.1" fill="none" stroke="#8a8a8a" stroke-width="0.8" stroke-opacity="0.6"/>
<line x1="622.90" y1="282.10" x2="686.50" y2="270.90" stroke="#6d9c2c" stroke-width="1.5" />
<line x1="628.00" y1="281.20" x2="672.00" y2="273.40" stroke="#18230a" stroke-width="1.5" stroke-dasharray="7 5.5" stroke-opacity="0.85"/>
<line x1="711.70" y1="361.40" x2="796.00" y2="478.50" stroke="#94394a" stroke-width="1.4" />
<path d="M654.0,203.5 C659.6,203.2 661.1,203.1 668.1,204.0 C675.1,204.9 686.8,207.0 696.2,209.0 C705.6,211.0 714.9,213.3 724.3,216.0 C733.7,218.7 744.2,221.5 752.4,225.1 C760.6,228.7 766.5,233.4 773.5,237.8 C780.5,242.2 789.5,247.1 794.6,251.8 C799.8,256.5 802.2,261.0 804.4,265.9 C806.6,270.8 807.4,276.9 807.9,281.3 C808.4,285.7 807.9,288.9 807.4,292.0 C806.9,295.1 805.5,297.1 804.9,299.7 C804.3,302.3 803.3,304.6 803.6,307.8 C803.9,311.0 806.3,315.1 806.8,318.6 C807.3,322.1 806.8,325.5 806.6,329.0 C806.4,332.5 806.8,334.9 805.6,339.6 C804.4,344.3 802.6,350.8 799.3,357.0 C796.0,363.2 791.1,371.1 786.0,377.0 C780.9,382.9 775.0,388.0 768.6,392.2 C762.2,396.4 755.7,398.7 747.4,402.0 C739.1,405.3 728.6,408.8 719.0,411.8 C709.4,414.8 698.3,417.8 689.8,419.8 C681.3,421.8 675.0,422.8 668.0,423.6 C661.0,424.4 654.8,425.0 648.0,424.6 C641.2,424.2 635.6,423.2 627.5,421.5 C619.4,419.8 608.8,417.2 599.4,414.5 C590.0,411.8 580.7,409.0 571.3,405.4 C561.9,401.8 551.4,397.1 543.2,392.7 C535.0,388.2 528.1,383.1 522.2,378.7 C516.4,374.2 511.9,370.4 508.1,366.0 C504.4,361.6 501.6,357.1 499.7,352.0 C497.8,346.9 497.2,340.1 496.9,335.1 C496.6,330.1 497.6,325.5 497.8,322.0 C498.0,318.5 499.0,317.2 498.3,314.0 C497.6,310.8 494.5,306.8 493.8,303.0 C493.1,299.2 492.8,296.4 494.0,291.2 C495.2,285.9 497.6,277.8 501.1,271.5 C504.6,265.2 509.2,259.1 515.1,253.2 C521.0,247.3 528.0,241.3 536.2,236.4 C544.4,231.5 553.8,227.7 564.3,223.7 C574.8,219.7 587.7,215.5 599.4,212.5 C611.1,209.5 625.5,207.0 634.6,205.5 C643.7,204.0 648.4,203.8 654.0,203.5 Z" fill="none" stroke="#fba22c" stroke-width="2.0" stroke-linejoin="round"/>
<line x1="650.70" y1="259.70" x2="650.70" y2="293.80" stroke="#1a1a1a" stroke-width="1.3" />
<line x1="641.30" y1="264.30" x2="657.60" y2="286.20" stroke="#a8384a" stroke-width="1.6" />
<line x1="644.60" y1="268.80" x2="657.60" y2="286.20" stroke="#2a0d12" stroke-width="1.4" stroke-opacity="0.85"/>
<circle cx="651.00" cy="277.30" r="10.20" fill="none" stroke="#f0f0f0" stroke-width="1.1" />
<circle cx="651.00" cy="277.30" r="10.20" fill="none" stroke="#e0505a" stroke-width="1.1" stroke-dasharray="4 4"/>
<circle cx="651.20" cy="298.40" r="3.10" fill="#f5a623" stroke="#4a3008" stroke-width="0.9" />
<rect x="56.00" y="92.70" width="1187.70" height="26.80" fill="#323232" fill-opacity="0.96"/>
<rect x="56.00" y="119.50" width="1187.70" height="24.50" fill="#2f2f2f" fill-opacity="0.75"/>
<rect x="64.75" y="96.75" width="30.50" height="18.50" fill="#2a2a2a" rx="4" stroke="#3f3f3f" stroke-width="1" />
<g transform="translate(76.00,106.00) scale(1.0)" ><path d="M-7,1 H3 M-7.6,5 H5 M-3.2,-1.8 L-4.4,7 M1.8,2 L2.4,7" stroke="#e4e4e4" stroke-width="1.1" fill="none" stroke-linecap="round"/><circle cx="2.6" cy="-3" r="3.9" fill="#e4e4e4"/><path d="M0.4,-3.6 A2.4,2.4 0 0 1 2.4,-5.4" stroke="#303030" stroke-width="0.9" fill="none"/></g>
<path d="M85.70,105.05 L88.60,108.15 L91.50,105.05" fill="none" stroke="#e0e0e0" stroke-width="1.25" stroke-linecap="round" stroke-linejoin="round"/>
<rect x="101.50" y="96.75" width="109.00" height="18.50" fill="#2a2a2a" rx="4" stroke="#3f3f3f" stroke-width="1" />
<g transform="translate(114.10,106.00) scale(1.0)" ><rect x="-4.1" y="-4.1" width="8.2" height="8.2" fill="#e4e4e4"/><path d="M-6.6,-3.4 V-6.6 H-3.4 M3.4,-6.6 H6.6 V-3.4 M6.6,3.4 V6.6 H3.4 M-3.4,6.6 H-6.6 V3.4" stroke="#e4e4e4" stroke-width="1.1" fill="none" stroke-linejoin="round"/></g>
<text x="127.25" y="109.60" font-size="12" fill="#dcdcdc" textLength="65.75" lengthAdjust="spacingAndGlyphs" >Object Mode</text>
<path d="M201.50,105.05 L204.40,108.15 L207.30,105.05" fill="none" stroke="#e0e0e0" stroke-width="1.25" stroke-linecap="round" stroke-linejoin="round"/>
<text x="223.50" y="109.60" font-size="12" fill="#dcdcdc" textLength="25.50" lengthAdjust="spacingAndGlyphs" >View</text>
<text x="264.25" y="109.60" font-size="12" fill="#dcdcdc" textLength="32.25" lengthAdjust="spacingAndGlyphs" >Select</text>
<text x="311.50" y="109.60" font-size="12" fill="#dcdcdc" textLength="20.50" lengthAdjust="spacingAndGlyphs" >Add</text>
<text x="347.25" y="109.60" font-size="12" fill="#dcdcdc" textLength="34.25" lengthAdjust="spacingAndGlyphs" >Object</text>
<rect x="524.50" y="96.75" width="79.00" height="18.50" fill="#2a2a2a" rx="4" stroke="#3f3f3f" stroke-width="1" />
<g transform="translate(536.00,106.00) scale(1.0)" ><path d="M-4.6,4.8 V-6.4 M-4.6,4.8 H6.8 M-4.6,4.8 L3,-2.8" stroke="#e4e4e4" stroke-width="1.1" fill="none" stroke-linecap="round"/><path d="M-6.6,-4.4 L-4.6,-7 L-2.6,-4.4 M4.6,2.8 L7.2,4.8 L4.6,6.8 M0.2,-3 H3.2 V0" stroke="#e4e4e4" stroke-width="1.1" fill="none" stroke-linecap="round" stroke-linejoin="round"/><circle cx="-4.6" cy="4.8" r="1.6" fill="#2b2b2b" stroke="#e4e4e4" stroke-width="1"/></g>
<text x="550.25" y="109.60" font-size="12" fill="#dcdcdc" textLength="33.00" lengthAdjust="spacingAndGlyphs" >Global</text>
<path d="M594.50,105.05 L597.40,108.15 L600.30,105.05" fill="none" stroke="#e0e0e0" stroke-width="1.25" stroke-linecap="round" stroke-linejoin="round"/>
<rect x="609.50" y="96.75" width="31.00" height="18.50" fill="#2a2a2a" rx="4" stroke="#3f3f3f" stroke-width="1" />
<g transform="translate(621.20,106.00) scale(1.0)" ><circle cx="-2.6" cy="2.4" r="4.1" fill="none" stroke="#e4e4e4" stroke-width="1.15"/><circle cx="2.8" cy="-2.6" r="4.1" fill="none" stroke="#e4e4e4" stroke-width="1.15"/><circle cx="0.1" cy="-0.1" r="1.3" fill="#e4e4e4"/></g>
<path d="M631.10,105.05 L634.00,108.15 L636.90,105.05" fill="none" stroke="#e0e0e0" stroke-width="1.25" stroke-linecap="round" stroke-linejoin="round"/>
<rect x="646.50" y="96.75" width="51.00" height="18.50" fill="#2a2a2a" rx="4" stroke="#3f3f3f" stroke-width="1" />
<path d="M650.50,96.75 H665.50 V115.25 H650.50 A4,4 0 0 1 646.50,111.25 V100.75 A4,4 0 0 1 650.50,96.75 Z" fill="#545454" />
<g transform="translate(656.00,106.00) scale(1.0)" ><path d="M-5.6,4.6 V-0.4 A5.6,5.6 0 0 1 5.6,-0.4 V4.6 H2.4 V-0.4 A2.4,2.4 0 0 0 -2.4,-0.4 V4.6 Z" fill="none" stroke="#d6d6d6" stroke-width="1.1" stroke-linejoin="round" transform="rotate(45) translate(0,-0.6)"/></g>
<rect x="669.50" y="100.00" width="12.00" height="12.00" fill="#ececec" />
<path d="M688.20,105.05 L691.10,108.15 L694.00,105.05" fill="none" stroke="#e0e0e0" stroke-width="1.25" stroke-linecap="round" stroke-linejoin="round"/>
<rect x="703.50" y="96.75" width="50.50" height="18.50" fill="#2e2e2e" rx="4" stroke="#383838" stroke-width="1" />
<path d="M707.50,96.75 H722.00 V115.25 H707.50 A4,4 0 0 1 703.50,111.25 V100.75 A4,4 0 0 1 707.50,96.75 Z" fill="#505050" />
<g transform="translate(712.80,106.00) scale(1.0)" ><circle cx="0" cy="0" r="5.6" fill="none" stroke="#8e8e8e" stroke-width="1.1"/><circle cx="0" cy="0" r="1.9" fill="#dcdcdc"/></g>
<g transform="translate(734.00,106.00) scale(1.0)" ><path d="M-7,5.6 C-3,5.6 -2.8,-6.2 0,-6.2 C2.8,-6.2 3,5.6 7,5.6" fill="none" stroke="#c4c4c4" stroke-width="1.15" stroke-linecap="round"/></g>
<path d="M745.10,105.05 L748.00,108.15 L750.90,105.05" fill="none" stroke="#5a5a5a" stroke-width="1.25" stroke-linecap="round" stroke-linejoin="round"/>
<rect x="988.25" y="96.75" width="31.25" height="18.50" fill="#2a2a2a" rx="4" stroke="#3f3f3f" stroke-width="1" />
<g transform="translate(999.00,105.50) scale(1.0)" ><path d="M-7,-0.4 L-6,8 L-3.6,5.6 L-0.6,4.6 Z" fill="#e4e4e4"/><path d="M-5.4,-2.6 C-2.6,-7 4.6,-7 7.4,-2.6 C4.6,1.6 -2.6,1.6 -5.4,-2.6 Z" fill="#e4e4e4"/><circle cx="1" cy="-2.8" r="2.1" fill="#2b2b2b"/><circle cx="1" cy="-2.8" r="0.9" fill="#e4e4e4"/></g>
<path d="M1010.30,105.05 L1013.20,108.15 L1016.10,105.05" fill="none" stroke="#e0e0e0" stroke-width="1.25" stroke-linecap="round" stroke-linejoin="round"/>
<rect x="1025.75" y="96.75" width="38.75" height="18.50" fill="#2a2a2a" rx="4" stroke="#3f3f3f" stroke-width="1" />
<path d="M1029.75,96.75 H1044.50 V115.25 H1029.75 A4,4 0 0 1 1025.75,111.25 V100.75 A4,4 0 0 1 1029.75,96.75 Z" fill="#4772b3" />
<g transform="translate(1035.20,106.00) scale(1.0)" ><path d="M-3.4,3.4 L5.8,-5.8 M1,-6.2 H6.2 V-1" fill="none" stroke="#ffffff" stroke-width="1.15" stroke-linecap="round" stroke-linejoin="round"/><path d="M-5.8,-5.8 A11.4,11.4 0 0 1 5.4,6" fill="none" stroke="#ffffff" stroke-width="1.15" stroke-linecap="round"/><circle cx="-4.8" cy="4.8" r="1.9" fill="#4772b3" stroke="#ffffff" stroke-width="1.1"/></g>
<path d="M1051.60,105.05 L1054.50,108.15 L1057.40,105.05" fill="none" stroke="#e0e0e0" stroke-width="1.25" stroke-linecap="round" stroke-linejoin="round"/>
<rect x="1070.75" y="96.75" width="38.75" height="18.50" fill="#2a2a2a" rx="4" stroke="#3f3f3f" stroke-width="1" />
<path d="M1074.75,96.75 H1089.50 V115.25 H1074.75 A4,4 0 0 1 1070.75,111.25 V100.75 A4,4 0 0 1 1074.75,96.75 Z" fill="#4772b3" />
<g transform="translate(1080.20,106.00) scale(1.0)" ><circle cx="1.6" cy="-1.4" r="5.4" fill="#ffffff"/><circle cx="-1.6" cy="1.6" r="5" fill="#4772b3"/><path d="M-6.2,-0.4 A5,5 0 1 0 2.6,4.2" fill="none" stroke="#ffffff" stroke-width="1.2" stroke-linecap="round"/><path d="M-2.4,-2.4 A4.4,4.4 0 0 1 2.6,2.4" fill="none" stroke="#ffffff" stroke-width="1.1" stroke-dasharray="2.2 1.4"/></g>
<path d="M1096.60,105.05 L1099.50,108.15 L1102.40,105.05" fill="none" stroke="#e0e0e0" stroke-width="1.25" stroke-linecap="round" stroke-linejoin="round"/>
<rect x="1116.50" y="96.75" width="18.00" height="18.50" fill="#545454" rx="4" />
<g transform="translate(1125.50,106.00) scale(1.0)" ><path d="M-3,-3.6 V-6.6 H6.6 V3 H3.6" fill="none" stroke="#d8d8d8" stroke-width="1.1" stroke-linejoin="round"/><rect x="-6.6" y="-3.4" width="10" height="10" fill="none" stroke="#d8d8d8" stroke-width="1.1" stroke-linejoin="round"/><rect x="-2.6" y="1.6" width="1.4" height="1.4" fill="#d8d8d8"/><rect x="0.6" y="1.6" width="1.4" height="1.4" fill="#d8d8d8"/><rect x="-2.6" y="-1.4" width="1.4" height="1.4" fill="#d8d8d8"/></g>
<rect x="1140.75" y="96.75" width="95.75" height="18.50" fill="#2a2a2a" rx="4" stroke="#3f3f3f" stroke-width="1" />
<path d="M1144.75,96.75 H1159.50 V115.25 H1144.75 A4,4 0 0 1 1140.75,111.25 V100.75 A4,4 0 0 1 1144.75,96.75 Z" fill="#545454" />
<rect x="1159.50" y="96.75" width="18.75" height="18.50" fill="#4772b3" />
<rect x="1178.75" y="96.75" width="18.25" height="18.50" fill="#545454" />
<rect x="1197.50" y="96.75" width="18.25" height="18.50" fill="#545454" />
<g transform="translate(1150.20,106.00) scale(1.0)" ><circle r="6" fill="none" stroke="#d8d8d8" stroke-width="1.05"/><ellipse rx="2.7" ry="6" fill="none" stroke="#d8d8d8" stroke-width="1"/><path d="M-6,0 H6" stroke="#d8d8d8" stroke-width="1"/></g>
<g transform="translate(1168.90,106.00) scale(1.0)" ><circle r="6.3" fill="#ffffff"/></g>
<g transform="translate(1187.90,106.00) scale(1.0)" ><circle r="6" fill="none" stroke="#d8d8d8" stroke-width="1.05"/><path d="M0,-6 A6,6 0 0 0 0,6 Z" fill="#d8d8d8"/><path d="M0,0 H6 A6,6 0 0 1 0,6 Z" fill="#d8d8d8" fill-opacity="0.55"/></g>
<g transform="translate(1206.60,106.00) scale(1.0)" ><circle r="6" fill="none" stroke="#d8d8d8" stroke-width="1.05"/><path d="M-3.9,-1 A4,4 0 0 1 -0.6,-3.9" fill="none" stroke="#d8d8d8" stroke-width="1.1" stroke-linecap="round"/><path d="M5.4,1.4 A5.6,5.6 0 0 1 -2.6,5" fill="none" stroke="#d8d8d8" stroke-width="2.2" stroke-opacity="0.55"/></g>
<path d="M1223.30,105.05 L1226.20,108.15 L1229.10,105.05" fill="none" stroke="#e0e0e0" stroke-width="1.25" stroke-linecap="round" stroke-linejoin="round"/>
<rect x="101.50" y="123.00" width="93.25" height="17.50" fill="#484848" rx="3.5" />
<path d="M105.00,123.00 H119.50 V140.50 H105.00 A3.5,3.5 0 0 1 101.50,137.00 V126.50 A3.5,3.5 0 0 1 105.00,123.00 Z" fill="#4772b3" />
<g transform="translate(110.60,131.75) scale(1.0)" ><rect x="-6" y="-6" width="12" height="12" fill="none" stroke="#ffffff" stroke-width="1.2" stroke-dasharray="2.6 1.83" stroke-dashoffset="1.3"/></g>
<g transform="translate(129.25,131.75) scale(1.0)" ><path d="M-2,-6.5 H6.5 V2 H2 V6.5 H-6.5 V-2 H-2 Z" fill="#c8c8c8"/></g>
<g transform="translate(147.90,131.75) scale(1.0)" ><path d="M-2,-6.5 H6.5 V2 H2 V-2 H-2 Z" fill="#c8c8c8"/><path d="M-2,-2 H-6.5 V6.5 H2 V2" fill="none" stroke="#c8c8c8" stroke-width="1.1" stroke-dasharray="1.6 1.4"/></g>
<g transform="translate(166.55,131.75) scale(1.0)" ><path d="M-2,-6.5 H6.5 V2 H2 V6.5 H-6.5 V-2 H-2 Z" fill="#c8c8c8"/><rect x="-2" y="-2" width="4" height="4" fill="#3f3f3f"/></g>
<g transform="translate(185.20,131.75) scale(1.0)" ><rect x="-6" y="-6" width="12" height="12" fill="none" stroke="#c8c8c8" stroke-width="1.1" stroke-dasharray="1.6 1.5"/><rect x="-2.4" y="-2.4" width="4.8" height="4.8" fill="#c8c8c8"/></g>
<line x1="120.05" y1="123.00" x2="120.05" y2="140.50" stroke="#3a3a3a" stroke-width="0.8" />
<line x1="138.70" y1="123.00" x2="138.70" y2="140.50" stroke="#3a3a3a" stroke-width="0.8" />
<line x1="157.35" y1="123.00" x2="157.35" y2="140.50" stroke="#3a3a3a" stroke-width="0.8" />
<line x1="176.00" y1="123.00" x2="176.00" y2="140.50" stroke="#3a3a3a" stroke-width="0.8" />
<rect x="1172.75" y="122.50" width="63.75" height="18.00" fill="#2b2b2b" rx="4" stroke="#383838" stroke-width="1" />
<text x="1180.25" y="135.60" font-size="12" fill="#dcdcdc" textLength="40.00" lengthAdjust="spacingAndGlyphs" >Options</text>
<path d="M1227.10,130.85 L1230.00,133.95 L1232.90,130.85" fill="none" stroke="#e0e0e0" stroke-width="1.25" stroke-linecap="round" stroke-linejoin="round"/>
<text x="124.25" y="165.00" font-size="12" fill="#f0f0f0" textLength="89.25" lengthAdjust="spacingAndGlyphs" >User Perspective</text>
<text x="124.25" y="183.00" font-size="12" fill="#f0f0f0" textLength="113.00" lengthAdjust="spacingAndGlyphs" >(1) Collection | Donut</text>
<path d="M69.25,153.75 H101.50 A4,4 0 0 1 105.50,157.75 V217.25 A4,4 0 0 1 101.50,221.25 H69.25 A4,4 0 0 1 65.25,217.25 V157.75 A4,4 0 0 1 69.25,153.75 Z" fill="#262626" />
<path d="M69.25,153.75 H101.50 A4,4 0 0 1 105.50,157.75 V186.90 H65.25 V157.75 A4,4 0 0 1 69.25,153.75 Z" fill="#4772b3" />
<line x1="65.25" y1="187.20" x2="105.50" y2="187.20" stroke="#303030" stroke-width="0.8" />
<g transform="translate(84.47,170.00) scale(1.0)" ><rect x="-10.5" y="-10.5" width="21" height="21" rx="1.5" fill="none" stroke="#f0a832" stroke-width="1.3" stroke-dasharray="3.4 2.2"/><path d="M-2.9,-5.7 L5.1,1.9 L0.5,2.3 L-2.9,5.7 Z" fill="#ececec"/></g>
<g transform="translate(84.47,204.30) scale(1.0)" ><circle r="11" fill="none" stroke="#e8e8e8" stroke-width="1.5"/><circle r="11" fill="none" stroke="#b03a3a" stroke-width="1.5" stroke-dasharray="4.32 4.32"/><path d="M-7.6,0 H-2.4 M2.4,0 H7.6 M0,-7.6 V-2.4 M0,2.4 V7.6" stroke="#c4c4c4" stroke-width="1.2"/></g>
<path d="M103.90,185.30 L100.50,185.30 L103.90,181.90 Z" fill="#9db7de"/>
<path d="M69.25,228.00 H101.50 A4,4 0 0 1 105.50,232.00 V362.25 A4,4 0 0 1 101.50,366.25 H69.25 A4,4 0 0 1 65.25,362.25 V232.00 A4,4 0 0 1 69.25,228.00 Z" fill="#262626" />
<line x1="65.25" y1="262.40" x2="105.50" y2="262.40" stroke="#353535" stroke-width="1" />
<line x1="65.25" y1="297.40" x2="105.50" y2="297.40" stroke="#353535" stroke-width="1" />
<line x1="65.25" y1="332.40" x2="105.50" y2="332.40" stroke="#353535" stroke-width="1" />
<g transform="translate(84.47,245.00) scale(1.0)" ><path d="M0,-11.5 L3.4,-6.6 H-3.4 Z M0,11.5 L3.4,6.6 H-3.4 Z M-11.5,0 L-6.6,-3.4 V3.4 Z M11.5,0 L6.6,-3.4 V3.4 Z" fill="#e6e6e6"/><path d="M0,-6 V-3.4 M0,3.4 V6 M-6,0 H-3.4 M3.4,0 H6" stroke="#e6e6e6" stroke-width="1.6"/></g>
<g transform="translate(84.47,280.00) scale(1.0)" ><path d="M-8.6,-3.4 A9.4,9.4 0 0 1 8.6,-3.4" fill="none" stroke="#e6e6e6" stroke-width="1.3"/><path d="M7.4,4.6 A9.4,9.4 0 0 1 -7.4,4.6" fill="none" stroke="#e6e6e6" stroke-width="1.3"/><path d="M-11.6,-1.6 H-5.6 L-8.6,3.4 Z M11.6,1.2 H5.6 L8.6,-3.8 Z" fill="#e6e6e6"/><path d="M0,-3.8 L3.8,0 L0,3.8 L-3.8,0 Z" fill="#b4b4b4"/></g>
<g transform="translate(84.47,314.60) scale(1.0)" ><rect x="-8.6" y="-0.2" width="8.8" height="8.8" fill="#e6e6e6"/><path d="M-8,-2.6 V-8.4 H8.4 V8 H2.6" fill="none" stroke="#c0c0c0" stroke-width="1.05"/><path d="M1.6,-1.6 L6,-6" stroke="#e6e6e6" stroke-width="1.3"/><path d="M7,-7 L6.6,-2.8 L2.8,-6.6 Z" fill="#e6e6e6"/></g>
<path d="M103.90,330.15 L100.50,330.15 L103.90,326.75 Z" fill="#8a8a8a"/>
<g transform="translate(84.47,349.60) scale(1.0)" ><rect x="-4" y="-4" width="8" height="8" rx="0.8" fill="#e6e6e6"/><path d="M-5,-9 A10.2,10.2 0 0 0 -9,-5 M5,-9 A10.2,10.2 0 0 1 9,-5 M-5,9 A10.2,10.2 0 0 1 -9,5 M5,9 A10.2,10.2 0 0 0 9,5" fill="none" stroke="#e6e6e6" stroke-width="1.2"/><path d="M0,-11 L3,-6.8 H-3 Z M0,11 L3,6.8 H-3 Z M-11,0 L-6.8,-3 V3 Z M11,0 L6.8,-3 V3 Z" fill="#e6e6e6"/></g>
<path d="M69.25,373.75 H101.50 A4,4 0 0 1 105.50,377.75 V437.25 A4,4 0 0 1 101.50,441.25 H69.25 A4,4 0 0 1 65.25,437.25 V377.75 A4,4 0 0 1 69.25,373.75 Z" fill="#262626" />
<line x1="65.25" y1="407.40" x2="105.50" y2="407.40" stroke="#353535" stroke-width="1" />
<g transform="translate(84.77,389.80) scale(1.0)" ><path d="M-12,6.4 C-9.4,9.6 -6,10.4 -2.4,7.6 C1,5 3,2.4 6,2.6 C8.6,2.8 10.6,5 12,7.6" fill="none" stroke="#7fd8a8" stroke-width="1.3" stroke-linecap="round"/><g transform="translate(-12.4,5.6) rotate(-44)"><path d="M0,0 L3.6,-2.4 H21.6 V2.4 H3.6 Z" fill="#ececec"/><path d="M18.4,-2.4 V2.4" stroke="#262626" stroke-width="1"/><path d="M0,0 L1.6,-1.05 V1.05 Z" fill="#262626"/></g></g>
<path d="M103.90,405.15 L100.50,405.15 L103.90,401.75 Z" fill="#8a8a8a"/>
<g transform="translate(84.77,424.50) scale(1.0)" ><path d="M-5,8.5 V-1.1 A9.6,9.6 0 0 1 4.6,8.5 Z" fill="#84dcae"/><path d="M-5,-3.9 A12.4,12.4 0 0 1 7.4,8.5" fill="none" stroke="#84dcae" stroke-width="1.2"/><rect x="-10" y="-11.2" width="5" height="22.6" fill="#ececec"/><rect x="-10" y="8.5" width="20.6" height="3" fill="#ececec"/><path d="M-8.2,-8.6 H-5 M-7,-6.2 H-5 M-8.2,-3.8 H-5 M-7,-1.4 H-5 M-8.2,1 H-5 M-7,3.4 H-5 M-8.2,5.8 H-5 M-3,9.8 V11.5 M-0.6,10.4 V11.5 M1.8,9.8 V11.5 M4.2,10.4 V11.5 M6.6,9.8 V11.5 M9,10.4 V11.5" stroke="#2a2a2a" stroke-width="0.7"/></g>
<path d="M69.25,448.00 H101.50 A4,4 0 0 1 105.50,452.00 V482.00 H65.25 V452.00 A4,4 0 0 1 69.25,448.00 Z" fill="#262626" />
<g transform="translate(83.97,466.00) scale(1.0)" ><path d="M-7.6,-3.4 L-2.2,-8.4 H11 V5.6 L6,10.4 H-7.6 Z M-7.6,-3.4 H6 V10.4 M6,-3.4 L11,-8.4" fill="none" stroke="#7fd8a8" stroke-width="1.15" stroke-linejoin="round"/><path d="M-13.2,-9.8 H-6 M-9.6,-13.4 V-6.2" stroke="#7fd8a8" stroke-width="1.5"/></g>
<path d="M103.90,477.60 L100.50,477.60 L103.90,474.20 Z" fill="#8a8a8a"/>
<circle cx="1183.75" cy="178.75" r="6.70" fill="#4a3035" stroke="#b8394c" stroke-width="1.2" fill-opacity="0.9"/>
<circle cx="1164.25" cy="200.20" r="7.60" fill="#5b6f2c" stroke="#8ec81c" stroke-width="1.3" />
<circle cx="1195.00" cy="222.00" r="7.10" fill="#3d4c62" stroke="#3a7fdc" stroke-width="1.3" />
<line x1="1194.50" y1="194.50" x2="1194.50" y2="173.00" stroke="#3b8df0" stroke-width="2.2" />
<line x1="1194.50" y1="195.00" x2="1218.00" y2="190.00" stroke="#8bc21b" stroke-width="2.4" />
<line x1="1194.50" y1="194.50" x2="1201.00" y2="203.00" stroke="#f53a55" stroke-width="2.4" />
<circle cx="1194.50" cy="166.75" r="8.30" fill="#3290f5" />
<circle cx="1225.00" cy="188.75" r="8.10" fill="#84bd16" />
<circle cx="1205.00" cy="209.50" r="8.40" fill="#ff3653" />
<text x="1190.60" y="171.20" font-size="12" fill="#0c1d33" font-weight="bold" >Z</text>
<text x="1220.80" y="193.20" font-size="12" fill="#1c2b05" font-weight="bold" >Y</text>
<text x="1200.80" y="214.00" font-size="12" fill="#3a0a12" font-weight="bold" >X</text>
<circle cx="1222.40" cy="249.30" r="13.80" fill="#222222" fill-opacity="0.62"/>
<g transform="translate(1222.40,249.30) scale(1.0)" ><circle cx="1.4" cy="-1.6" r="6.5" fill="#e8e8e8"/><path d="M-3.4,3.2 L-7.6,7.4" stroke="#e8e8e8" stroke-width="2.3" stroke-linecap="round"/><path d="M-2,-1.6 H4.8 M1.4,-5 V1.8" stroke="#2a2a2a" stroke-width="1.25"/></g>
<circle cx="1222.40" cy="279.50" r="13.80" fill="#222222" fill-opacity="0.62"/>
<g transform="translate(1222.40,279.50) scale(1.0)" ><path d="M-3.5,-6.6 L-2.4,1.4 M0.5,-7.6 L0.4,0.8 M3.7,-6.6 L2.8,1.4 M6.8,-2.6 L4.4,3.4" stroke="#e8e8e8" stroke-width="2.1" stroke-linecap="round" fill="none"/><path d="M-8,0.2 C-6.4,1.6 -5,3.2 -3.4,5.2" stroke="#e8e8e8" stroke-width="2.3" stroke-linecap="round" fill="none"/><path d="M-3.6,0.6 H4.6 L5.4,2.6 C5,6 3.4,8.4 0.6,8.4 C-2.4,8.4 -4.6,6.4 -5.6,3.4 Z" fill="#e8e8e8"/></g>
<circle cx="1222.40" cy="309.60" r="13.80" fill="#222222" fill-opacity="0.62"/>
<g transform="translate(1221.80,309.60) scale(1.0)" ><circle cx="-3.6" cy="-4.6" r="3.1" fill="#e8e8e8"/><circle cx="3" cy="-5" r="3.6" fill="#e8e8e8"/><circle cx="-3.6" cy="-4.6" r="1.1" fill="#2a2a2a"/><circle cx="3" cy="-5" r="1.3" fill="#2a2a2a"/><rect x="-6.6" y="-1.4" width="11.4" height="7.6" rx="1" fill="#e8e8e8"/><path d="M5.6,2.2 L9,0 V5.6 L5.6,3.6 Z" fill="#e8e8e8"/><path d="M-4.6,6.2 L-6.6,8.6 H-2.6 Z" fill="#e8e8e8"/></g>
<circle cx="1222.40" cy="340.00" r="13.80" fill="#222222" fill-opacity="0.62"/>
<g transform="translate(1222.40,340.00) scale(1.0)" ><path d="M-4.6,-6.4 H4.6 L8,6.4 H-8 Z" fill="none" stroke="#e8e8e8" stroke-width="1.3" stroke-linejoin="round"/><path d="M-1.5,-6.4 L-2.6,6.4 M1.5,-6.4 L2.6,6.4 M-5.7,-2.4 H5.7 M-6.8,1.8 H6.8" stroke="#e8e8e8" stroke-width="1.2"/></g>
<path d="M1240.00,158.50 H1244.00 V173.00 H1240.00 A3,3 0 0 1 1237.00,170.00 V161.50 A3,3 0 0 1 1240.00,158.50 Z" fill="#2a2a2a" />
<path d="M1242.6,162.4 L1239.3,165.7 L1242.6,169" fill="none" stroke="#c0c0c0" stroke-width="1.1" stroke-linecap="round" stroke-linejoin="round"/>
</g>
<g clip-path="url(#nclip)">
<rect x="56.00" y="481.50" width="1188.00" height="348.30" fill="#1d1d1d" />
<rect x="56.00" y="506.50" width="1188.00" height="323.30" fill="url(#dots)" />
<rect x="56.00" y="481.50" width="1188.00" height="25.20" fill="#222222" />
<rect x="64.75" y="484.40" width="31.25" height="19.20" fill="#2a2a2a" rx="4" stroke="#3d3d3d" stroke-width="1" />
<g transform="translate(76.60,494.00) scale(1.0)" ><rect x="-5.4" y="-7" width="8.2" height="5.8" rx="1.3" fill="#e4e4e4"/><rect x="-7" y="1.2" width="8.2" height="5.8" rx="1.3" fill="#e4e4e4"/><rect x="-4.6" y="-4.2" width="6.6" height="2.2" rx="0.8" fill="#9c9c9c"/><rect x="-6.2" y="4" width="6.6" height="2.2" rx="0.8" fill="#9c9c9c"/><path d="M3.2,-4.6 H4.2 A2.6,2.6 0 0 1 6.8,-2 V2.4 A2.6,2.6 0 0 1 4.2,5 H2" fill="none" stroke="#e4e4e4" stroke-width="1.1"/><path d="M3.4,3.6 L1.6,5 L3.4,6.4 Z" fill="#e4e4e4"/></g>
<path d="M86.50,493.05 L89.40,496.15 L92.30,493.05" fill="none" stroke="#e0e0e0" stroke-width="1.25" stroke-linecap="round" stroke-linejoin="round"/>
<text x="109.00" y="497.70" font-size="12" fill="#dcdcdc" textLength="25.25" lengthAdjust="spacingAndGlyphs" >View</text>
<text x="149.25" y="497.70" font-size="12" fill="#dcdcdc" textLength="32.50" lengthAdjust="spacingAndGlyphs" >Select</text>
<text x="196.75" y="497.70" font-size="12" fill="#dcdcdc" textLength="20.50" lengthAdjust="spacingAndGlyphs" >Add</text>
<text x="232.75" y="497.70" font-size="12" fill="#dcdcdc" textLength="26.75" lengthAdjust="spacingAndGlyphs" >Node</text>
<path d="M525.75,484.40 H552.50 V503.60 H525.75 A4,4 0 0 1 521.75,499.60 V488.40 A4,4 0 0 1 525.75,484.40 Z" fill="#2a2a2a" stroke="#3d3d3d" stroke-width="1" />
<g transform="translate(533.20,494.00) scale(1.0)" ><rect x="-5.4" y="-7" width="8.2" height="5.8" rx="1.3" fill="#e4e4e4"/><rect x="-7" y="1.2" width="8.2" height="5.8" rx="1.3" fill="#e4e4e4"/><rect x="-4.6" y="-4.2" width="6.6" height="2.2" rx="0.8" fill="#9c9c9c"/><rect x="-6.2" y="4" width="6.6" height="2.2" rx="0.8" fill="#9c9c9c"/><path d="M3.2,-4.6 H4.2 A2.6,2.6 0 0 1 6.8,-2 V2.4 A2.6,2.6 0 0 1 4.2,5 H2" fill="none" stroke="#e4e4e4" stroke-width="1.1"/><path d="M3.4,3.6 L1.6,5 L3.4,6.4 Z" fill="#e4e4e4"/></g>
<path d="M543.30,493.05 L546.20,496.15 L549.10,493.05" fill="none" stroke="#e0e0e0" stroke-width="1.25" stroke-linecap="round" stroke-linejoin="round"/>
<rect x="552.50" y="484.40" width="120.00" height="19.20" fill="#1d1d1d" stroke="#3d3d3d" stroke-width="1" />
<text x="560.00" y="497.70" font-size="12" fill="#dcdcdc" textLength="90.00" lengthAdjust="spacingAndGlyphs" >Geometry Nodes</text>
<rect x="672.50" y="484.40" width="19.70" height="19.20" fill="#545454" />
<g transform="translate(682.50,494.00) scale(1.0)" ><path d="M0,-6.3 C2,-5.3 4,-4.9 5.6,-4.9 C5.6,0.6 4.2,4.2 0,6.6 C-4.2,4.2 -5.6,0.6 -5.6,-4.9 C-4,-4.9 -2,-5.3 0,-6.3 Z" fill="none" stroke="#c8c8c8" stroke-width="1.1" stroke-linejoin="round"/></g>
<rect x="692.80" y="484.40" width="19.40" height="19.20" fill="#545454" />
<g transform="translate(702.50,494.00) scale(1.0)" ><path d="M-2.2,-3.2 V-6.2 H3.2 L6.2,-3.2 V3.6 H2.2" fill="none" stroke="#e4e4e4" stroke-width="1.25" stroke-linejoin="round"/><path d="M3,-6.2 V-3 H6.2 Z" fill="#e4e4e4"/><path d="M-6,-3 H2 V6.3 H-6 Z" fill="none" stroke="#e4e4e4" stroke-width="1.25" stroke-linejoin="round"/></g>
<path d="M712.80,484.40 H728.50 A4,4 0 0 1 732.50,488.40 V499.60 A4,4 0 0 1 728.50,503.60 H712.80 V484.40 Z" fill="#545454" />
<path d="M718.70,490.20 L726.30,497.80 M726.30,490.20 L718.70,497.80" stroke="#e8e8e8" stroke-width="1.2" fill="none" stroke-linecap="round"/>
<g transform="translate(748.50,494.00) scale(1.0)" ><g transform="rotate(45) translate(0,-1.2)"><path d="M-3.2,-6.8 H3.2 V-5.2 H2.1 V-1.4 L4.4,1.2 V2.4 H-4.4 V1.2 L-2.1,-1.4 V-5.2 H-3.2 Z" fill="none" stroke="#d0d0d0" stroke-width="1.05" stroke-linejoin="round"/><path d="M0,2.4 V8.6" stroke="#d0d0d0" stroke-width="1.1" stroke-linecap="round"/></g></g>
<rect x="1115.60" y="484.40" width="19.00" height="19.20" fill="#3a3a3a" rx="4" />
<g transform="translate(1125.00,494.00) scale(1.0)" ><path d="M-1.8,6 H5.4 M-1.8,6 V-6 M-6,-1.8 L-1.8,-6.2 L2.4,-1.8" fill="none" stroke="#7a7a7a" stroke-width="1.1" stroke-linecap="round" stroke-linejoin="round"/></g>
<rect x="1140.60" y="484.40" width="51.30" height="19.20" fill="#2a2a2a" rx="4" stroke="#3d3d3d" stroke-width="1" />
<path d="M1144.60,484.40 H1159.60 V503.60 H1144.60 A4,4 0 0 1 1140.60,499.60 V488.40 A4,4 0 0 1 1144.60,484.40 Z" fill="#545454" />
<g transform="translate(1150.00,494.00) scale(1.0)" ><path d="M-5.6,4.6 V-0.4 A5.6,5.6 0 0 1 5.6,-0.4 V4.6 H2.4 V-0.4 A2.4,2.4 0 0 0 -2.4,-0.4 V4.6 Z" fill="none" stroke="#d6d6d6" stroke-width="1.1" stroke-linejoin="round" transform="rotate(45) translate(0,-0.6)"/></g>
<g transform="translate(1170.50,494.00) scale(1.0)" ><rect x="-6.6" y="-6.4" width="4.8" height="4.8" fill="#e4e4e4"/><path d="M-7,2.4 H6.4 M-7,-3.8 H-6 M1.4,-3.8 H6.4 M-4.2,-1 V6.4 M2.6,-7 V6.4" stroke="#e4e4e4" stroke-width="1.05"/></g>
<path d="M1182.30,493.05 L1185.20,496.15 L1188.10,493.05" fill="none" stroke="#e0e0e0" stroke-width="1.25" stroke-linecap="round" stroke-linejoin="round"/>
<rect x="1197.50" y="484.40" width="39.10" height="19.20" fill="#2a2a2a" rx="4" stroke="#3d3d3d" stroke-width="1" />
<path d="M1201.50,484.40 H1216.25 V503.60 H1201.50 A4,4 0 0 1 1197.50,499.60 V488.40 A4,4 0 0 1 1201.50,484.40 Z" fill="#4772b3" />
<g transform="translate(1207.00,494.00) scale(1.0)" ><circle cx="1.6" cy="-1.4" r="5.4" fill="#ffffff"/><circle cx="-1.6" cy="1.6" r="5" fill="#4772b3"/><path d="M-6.2,-0.4 A5,5 0 1 0 2.6,4.2" fill="none" stroke="#ffffff" stroke-width="1.2" stroke-linecap="round"/><path d="M-2.4,-2.4 A4.4,4.4 0 0 1 2.6,2.4" fill="none" stroke="#ffffff" stroke-width="1.1" stroke-dasharray="2.2 1.4"/></g>
<path d="M1223.70,493.05 L1226.60,496.15 L1229.50,493.05" fill="none" stroke="#e0e0e0" stroke-width="1.25" stroke-linecap="round" stroke-linejoin="round"/>
<path d="M56.00,520.00 H59.50 A3,3 0 0 1 62.50,523.00 V532.50 A3,3 0 0 1 59.50,535.50 H56.00 V520.00 Z" fill="#222222" />
<path d="M57.80,524.40 L61.00,527.70 L57.80,531.00" fill="none" stroke="#c8c8c8" stroke-width="1.1" stroke-linecap="round" stroke-linejoin="round"/>
<g transform="translate(82.50,528.60) scale(1.0)" ><rect x="-4.1" y="-4.1" width="8.2" height="8.2" fill="#e4e4e4"/><path d="M-6.6,-3.4 V-6.6 H-3.4 M3.4,-6.6 H6.6 V-3.4 M6.6,3.4 V6.6 H3.4 M-3.4,6.6 H-6.6 V3.4" stroke="#e4e4e4" stroke-width="1.1" fill="none" stroke-linejoin="round"/></g>
<text x="98.50" y="532.40" font-size="12" fill="#dcdcdc" textLength="31.25" lengthAdjust="spacingAndGlyphs" >Donut</text>
<path d="M147.00,524.00 L151.40,528.30 L147.00,532.60" fill="none" stroke="#d8d8d8" stroke-width="1.2" stroke-linecap="round" stroke-linejoin="round"/>
<g transform="translate(168.80,528.20) scale(1.05)" ><path d="M6.6,-4.6 A4.6,4.6 0 0 1 0.6,0.4 L-4.2,5.6 A1.7,1.7 0 0 1 -6.6,3.2 L-1.4,-1.6 A4.6,4.6 0 0 1 3.6,-7.4 L1,-4.6 L1.6,-2.6 L3.6,-2 Z" fill="#e6e6e6" stroke="#e6e6e6" stroke-width="0.6" stroke-linejoin="round"/></g>
<text x="184.75" y="532.40" font-size="12" fill="#dcdcdc" textLength="86.75" lengthAdjust="spacingAndGlyphs" >GeometryNodes</text>
<path d="M288.30,524.00 L292.70,528.30 L288.30,532.60" fill="none" stroke="#d8d8d8" stroke-width="1.2" stroke-linecap="round" stroke-linejoin="round"/>
<g transform="translate(310.40,528.40) scale(1.0)" ><rect x="-5.4" y="-7" width="8.2" height="5.8" rx="1.3" fill="#e4e4e4"/><rect x="-7" y="1.2" width="8.2" height="5.8" rx="1.3" fill="#e4e4e4"/><rect x="-4.6" y="-4.2" width="6.6" height="2.2" rx="0.8" fill="#9c9c9c"/><rect x="-6.2" y="4" width="6.6" height="2.2" rx="0.8" fill="#9c9c9c"/><path d="M3.2,-4.6 H4.2 A2.6,2.6 0 0 1 6.8,-2 V2.4 A2.6,2.6 0 0 1 4.2,5 H2" fill="none" stroke="#e4e4e4" stroke-width="1.1"/><path d="M3.4,3.6 L1.6,5 L3.4,6.4 Z" fill="#e4e4e4"/></g>
<text x="326.00" y="532.40" font-size="12" fill="#dcdcdc" textLength="90.00" lengthAdjust="spacingAndGlyphs" >Geometry Nodes</text>
<path d="M1240.00,520.00 H1244.00 V535.50 H1240.00 A3,3 0 0 1 1237.00,532.50 V523.00 A3,3 0 0 1 1240.00,520.00 Z" fill="#222222" />
<path d="M1242.6,524.4 L1239.3,527.8 L1242.6,531.2" fill="none" stroke="#c0c0c0" stroke-width="1.1" stroke-linecap="round" stroke-linejoin="round"/>
<path d="M394.9,713.2 C520,713.2 780,706.9 906,706.9" fill="none" stroke="#0a0a0a" stroke-width="4.2" stroke-opacity="0.55"/>
<path d="M394.9,713.2 C520,713.2 780,706.9 906,706.9" fill="none" stroke="#00d6a3" stroke-width="2.1" />
<rect x="217.30" y="670.20" width="178.90" height="92.80" fill="#000" rx="5" filter="url(#nshadow)" fill-opacity="0.55"/>
<rect x="216.30" y="668.20" width="178.90" height="91.80" fill="#303030" rx="4.5" stroke="#101010" stroke-width="1.2" />
<path d="M220.90,668.80 H390.60 A4,4 0 0 1 394.60,672.80 V694.60 H216.90 V672.80 A4,4 0 0 1 220.90,668.80 Z" fill="#1f1f1f" />
<path d="M230.90,678.90 L235.60,683.70 L240.30,678.90" fill="none" stroke="#e0e0e0" stroke-width="1.5" stroke-linecap="round" stroke-linejoin="round"/>
<text x="248.60" y="685.90" font-size="14.6" fill="#e8e8e8" textLength="78.80" lengthAdjust="spacingAndGlyphs" >Group Input</text>
<rect x="907.40" y="670.20" width="178.40" height="86.00" fill="#000" rx="5" filter="url(#nshadow)" fill-opacity="0.55"/>
<rect x="906.40" y="668.20" width="178.40" height="85.00" fill="#303030" rx="4.5" stroke="#101010" stroke-width="1.2" />
<path d="M911.00,668.80 H1080.20 A4,4 0 0 1 1084.20,672.80 V694.60 H907.00 V672.80 A4,4 0 0 1 911.00,668.80 Z" fill="#1f1f1f" />
<path d="M921.00,678.90 L925.70,683.70 L930.40,678.90" fill="none" stroke="#e0e0e0" stroke-width="1.5" stroke-linecap="round" stroke-linejoin="round"/>
<text x="938.40" y="685.90" font-size="14.6" fill="#e8e8e8" textLength="91.00" lengthAdjust="spacingAndGlyphs" >Group Output</text>
<text x="313.10" y="717.70" font-size="14.6" fill="#e8e8e8" textLength="66.60" lengthAdjust="spacingAndGlyphs" >Geometry</text>
<text x="920.30" y="711.10" font-size="14.6" fill="#e8e8e8" textLength="67.40" lengthAdjust="spacingAndGlyphs" >Geometry</text>
<circle cx="394.90" cy="713.20" r="5.50" fill="#00d6a3" stroke="#0d2a22" stroke-width="1" />
<circle cx="394.90" cy="741.40" r="5.80" fill="#383838" stroke="#9a9a9a" stroke-width="1.2" />
<circle cx="906.00" cy="706.90" r="5.50" fill="#00d6a3" stroke="#0d2a22" stroke-width="1" />
<circle cx="906.00" cy="734.70" r="5.80" fill="#383838" stroke="#9a9a9a" stroke-width="1.2" />
</g>
<g clip-path="url(#oclip)">
<rect x="1247.60" y="92.70" width="247.60" height="207.70" fill="#282828" />
<rect x="1247.60" y="139.50" width="247.60" height="20.00" fill="#2b2b2b" />
<rect x="1247.60" y="179.50" width="247.60" height="20.00" fill="#2b2b2b" />
<rect x="1247.60" y="219.50" width="247.60" height="20.00" fill="#2b2b2b" />
<rect x="1247.60" y="259.50" width="247.60" height="20.00" fill="#2b2b2b" />
<rect x="1247.60" y="179.30" width="247.60" height="19.80" fill="#334f82" />
<rect x="1247.60" y="92.70" width="247.60" height="26.80" fill="#282828" />
<rect x="1255.25" y="96.75" width="30.75" height="18.50" fill="#2a2a2a" rx="4" stroke="#3d3d3d" stroke-width="1" />
<g transform="translate(1266.60,106.00) scale(1.0)" ><rect x="-6.6" y="-6.8" width="5" height="3" fill="#e4e4e4"/><rect x="-1" y="-1.6" width="7.6" height="3" fill="#e4e4e4"/><rect x="-1" y="3.6" width="7.6" height="3" fill="#e4e4e4"/><path d="M-4.2,-3.2 V5.1 H-1.6 M-4.2,-0.1 H-1.6" fill="none" stroke="#e4e4e4" stroke-width="1"/></g>
<path d="M1276.70,105.05 L1279.60,108.15 L1282.50,105.05" fill="none" stroke="#e0e0e0" stroke-width="1.25" stroke-linecap="round" stroke-linejoin="round"/>
<rect x="1292.00" y="96.75" width="31.00" height="18.50" fill="#2a2a2a" rx="4" stroke="#3d3d3d" stroke-width="1" />
<g transform="translate(1303.60,106.00) scale(1.0)" ><path d="M-6.6,-1.4 V6.6 H2.4" fill="none" stroke="#e4e4e4" stroke-width="1.1"/><path d="M-4.6,-3.4 V4.6 H4.4" fill="none" stroke="#e4e4e4" stroke-width="1.1"/><rect x="-2.6" y="-6.4" width="9.2" height="9" fill="#e4e4e4"/><path d="M-1.6,1.6 L1.6,-3 L3.4,-0.6 L4.4,-1.8 L5.6,1.6 Z" fill="#1d1d1d"/><circle cx="4.4" cy="-4.4" r="0.9" fill="#1d1d1d"/></g>
<path d="M1313.70,105.05 L1316.60,108.15 L1319.50,105.05" fill="none" stroke="#e0e0e0" stroke-width="1.25" stroke-linecap="round" stroke-linejoin="round"/>
<rect x="1339.75" y="96.75" width="116.25" height="18.50" fill="#1d1d1d" rx="4" stroke="#3d3d3d" stroke-width="1" />
<g transform="translate(1351.80,106.20) scale(1.0)" ><circle cx="2" cy="-2" r="4.3" fill="none" stroke="#d8d8d8" stroke-width="1.2"/><path d="M-1.1,1.1 L-6.6,6.6" stroke="#d8d8d8" stroke-width="1.4" stroke-linecap="round"/></g>
<rect x="1472.75" y="96.75" width="31.25" height="18.50" fill="#2a2a2a" rx="4" stroke="#3d3d3d" stroke-width="1" />
<g transform="translate(1481.90,106.30) scale(1.0)" ><path d="M-6.6,-6 H6.6 L1.4,0.4 V5.2 L-1.4,7 V0.4 Z" fill="none" stroke="#e0e0e0" stroke-width="1.2" stroke-linejoin="round"/></g>
<path d="M1495.00,105.05 L1497.00,108.15 L1499.00,105.05" fill="none" stroke="#e0e0e0" stroke-width="1.25" stroke-linecap="round" stroke-linejoin="round"/>
<line x1="1276.40" y1="164.20" x2="1276.40" y2="254.20" stroke="#4c4c4c" stroke-width="1" />
<g transform="translate(1277.10,129.40) scale(1.0)" ><rect x="-6.8" y="-6.4" width="13.6" height="3.6" fill="#e0e0e0"/><rect x="-5.8" y="-1.8" width="11.6" height="8.2" fill="#e0e0e0"/><rect x="-2" y="0" width="4" height="1.7" fill="#282828"/></g>
<text x="1291.40" y="134.20" font-size="12" fill="#dcdcdc" textLength="87.60" lengthAdjust="spacingAndGlyphs" >Scene Collection</text>
<path d="M1273.40,147.00 L1279.80,147.00 L1276.60,153.00 Z" fill="#d8d8d8"/>
<rect x="1287.40" y="140.20" width="19.30" height="18.70" fill="#454545" rx="4" stroke="#6a6a6a" stroke-width="1" />
<g transform="translate(1297.00,149.60) scale(1.0)" ><rect x="-6.8" y="-6.4" width="13.6" height="3.6" fill="#e6e6e6"/><rect x="-5.8" y="-1.8" width="11.6" height="8.2" fill="#e6e6e6"/><rect x="-2" y="0" width="4" height="1.7" fill="#454545"/></g>
<text x="1311.20" y="154.20" font-size="12" fill="#dcdcdc" textLength="52.30" lengthAdjust="spacingAndGlyphs" >Collection</text>
<g transform="translate(1437.60,149.00) scale(1.0)" ><rect x="-5.4" y="-5.4" width="10.8" height="10.8" rx="1.2" fill="#ececec"/><path d="M-3,0.2 L-0.8,2.6 L3.4,-2.6" fill="none" stroke="#222" stroke-width="1.7" stroke-linecap="round" stroke-linejoin="round"/></g>
<g transform="translate(1458.00,149.30) scale(1.0)" ><path d="M-6.8,0 C-3.6,-5.6 3.6,-5.6 6.8,0 C3.6,5.4 -3.6,5.4 -6.8,0 Z" fill="#e8e8e8"/><circle cx="0" cy="-0.2" r="2.7" fill="#2b2b2b"/><circle cx="0" cy="-0.2" r="1.25" fill="#e8e8e8"/></g>
<g transform="translate(1478.00,149.40) scale(1.0)" ><path d="M-6.8,-3.4 H-3.4 L-2.2,-5.6 H2.2 L3.4,-3.4 H6.8 V5.6 H-6.8 Z" fill="#e8e8e8"/><circle cx="0" cy="0.8" r="3.7" fill="none" stroke="#2b2b2b" stroke-width="1"/><circle cx="0" cy="0.8" r="1.8" fill="none" stroke="#2b2b2b" stroke-width="0.95"/></g>
<path d="M1294.20,166.30 L1300.00,169.50 L1294.20,172.70 Z" fill="#8a8a8a"/>
<g transform="translate(1316.80,168.80) scale(1.0)" ><circle cx="-3.8" cy="-3.4" r="2.9" fill="#9c6436"/><circle cx="2.8" cy="-4.2" r="3.9" fill="#9c6436"/><circle cx="-3.8" cy="-3.4" r="0.8" fill="#2a2a2a"/><circle cx="2.8" cy="-4.2" r="0.9" fill="#2a2a2a"/><rect x="-3.4" y="0.4" width="7.6" height="5.6" rx="0.8" fill="#9c6436"/><path d="M4.8,3.2 L7.6,1.2 V6 L4.8,4 Z" fill="#9c6436"/><path d="M-3.8,2.6 L-6.2,1.6 V4.2 Z" fill="#9c6436"/></g>
<text x="1331.30" y="174.30" font-size="12" fill="#8c8c8c" textLength="41.40" lengthAdjust="spacingAndGlyphs" >Camera</text>
<rect x="1393.30" y="160.30" width="19.70" height="17.90" fill="#585858" rx="4" stroke="#6c6c6c" stroke-width="0.8" />
<g transform="translate(1403.00,168.80) scale(1.0)" ><circle cx="-3.4" cy="-3" r="2.5" fill="none" stroke="#2a9a80" stroke-width="1.05"/><circle cx="2.6" cy="-3.8" r="3.5" fill="none" stroke="#2a9a80" stroke-width="1.05"/><circle cx="3.4" cy="-4.4" r="0.7" fill="#2a9a80"/><rect x="-3.4" y="1.4" width="7.2" height="4.8" rx="0.8" fill="none" stroke="#2a9a80" stroke-width="1.05"/><path d="M4.6,3.4 L7.2,1.8 V5.8 L4.6,4.2" fill="none" stroke="#2a9a80" stroke-width="1.05" stroke-linejoin="round"/><path d="M-3.6,3.2 L-6,2.2 V5 L-3.6,4.2" fill="none" stroke="#2a9a80" stroke-width="1" stroke-linejoin="round"/></g>
<g transform="translate(1458.00,169.80) scale(1.0)" ><path d="M-6,-1.4 C-3,3.4 3,3.4 6,-1.4" fill="none" stroke="#bdbdbd" stroke-width="1.05" stroke-linecap="round"/></g>
<g transform="translate(1478.00,169.40) scale(1.0)" ><path d="M-6.8,-3.4 H-3.4 L-2.2,-5.6 H2.2 L3.4,-3.4 H6.8 V5.6 H-6.8 Z" fill="#e8e8e8"/><circle cx="0" cy="0.8" r="3.7" fill="none" stroke="#282828" stroke-width="1"/><circle cx="0" cy="0.8" r="1.8" fill="none" stroke="#282828" stroke-width="0.95"/></g>
<path d="M1294.20,186.20 L1300.00,189.40 L1294.20,192.60 Z" fill="#e0e0e0"/>
<rect x="1307.30" y="179.90" width="19.50" height="18.60" fill="#6a7ea4" rx="4" stroke="#8c9cbc" stroke-width="0.9" />
<g transform="translate(1317.00,188.90) scale(1.0)" ><path d="M-5.3,-5.1 H5.3 L0,5.5 Z" fill="none" stroke="#eea05a" stroke-width="3.1" stroke-linejoin="round"/></g>
<text x="1331.30" y="194.30" font-size="12" fill="#f2ad3a" textLength="31.30" lengthAdjust="spacingAndGlyphs" >Donut</text>
<g transform="translate(1392.40,189.20) scale(1.0)" ><path d="M6.6,-4.6 A4.6,4.6 0 0 1 0.6,0.4 L-4.2,5.6 A1.7,1.7 0 0 1 -6.6,3.2 L-1.4,-1.6 A4.6,4.6 0 0 1 3.6,-7.4 L1,-4.6 L1.6,-2.6 L3.6,-2 Z" fill="none" stroke="#6d96ec" stroke-width="1.15" stroke-linejoin="round"/></g>
<g transform="translate(1412.60,189.40) scale(1.0)" ><path d="M-5,-4.8 H5 L0,5.2 Z" fill="none" stroke="#20cfa8" stroke-width="1.15" stroke-linejoin="round"/><rect x="-6.7" y="-6.5" width="3.3" height="3.3" rx="0.4" fill="#334f82" stroke="#20cfa8" stroke-width="1"/><rect x="3.4" y="-6.5" width="3.3" height="3.3" rx="0.4" fill="#334f82" stroke="#20cfa8" stroke-width="1"/><rect x="-1.65" y="3.5" width="3.3" height="3.3" rx="0.4" fill="#334f82" stroke="#20cfa8" stroke-width="1"/></g>
<g transform="translate(1458.00,189.30) scale(1.0)" ><path d="M-6.8,0 C-3.6,-5.6 3.6,-5.6 6.8,0 C3.6,5.4 -3.6,5.4 -6.8,0 Z" fill="#e8e8e8"/><circle cx="0" cy="-0.2" r="2.7" fill="#334f82"/><circle cx="0" cy="-0.2" r="1.25" fill="#e8e8e8"/></g>
<g transform="translate(1478.00,189.40) scale(1.0)" ><path d="M-6.8,-3.4 H-3.4 L-2.2,-5.6 H2.2 L3.4,-3.4 H6.8 V5.6 H-6.8 Z" fill="#e8e8e8"/><circle cx="0" cy="0.8" r="3.7" fill="none" stroke="#334f82" stroke-width="1"/><circle cx="0" cy="0.8" r="1.8" fill="none" stroke="#334f82" stroke-width="0.95"/></g>
<path d="M1294.20,206.30 L1300.00,209.50 L1294.20,212.70 Z" fill="#d8d8d8"/>
<g transform="translate(1317.00,209.10) scale(1.0)" ><path d="M-5.3,-5.1 H5.3 L0,5.5 Z" fill="none" stroke="#e59b54" stroke-width="3.1" stroke-linejoin="round"/></g>
<text x="1331.30" y="214.30" font-size="12" fill="#dcdcdc" textLength="24.60" lengthAdjust="spacingAndGlyphs" >Icing</text>
<g transform="translate(1386.00,209.40) scale(1.0)" ><path d="M-5,-4.8 H5 L0,5.2 Z" fill="none" stroke="#1fc7a0" stroke-width="1.15" stroke-linejoin="round"/><rect x="-6.7" y="-6.5" width="3.3" height="3.3" rx="0.4" fill="#282828" stroke="#1fc7a0" stroke-width="1"/><rect x="3.4" y="-6.5" width="3.3" height="3.3" rx="0.4" fill="#282828" stroke="#1fc7a0" stroke-width="1"/><rect x="-1.65" y="3.5" width="3.3" height="3.3" rx="0.4" fill="#282828" stroke="#1fc7a0" stroke-width="1"/></g>
<g transform="translate(1458.00,209.30) scale(1.0)" ><path d="M-6.8,0 C-3.6,-5.6 3.6,-5.6 6.8,0 C3.6,5.4 -3.6,5.4 -6.8,0 Z" fill="#e8e8e8"/><circle cx="0" cy="-0.2" r="2.7" fill="#282828"/><circle cx="0" cy="-0.2" r="1.25" fill="#e8e8e8"/></g>
<g transform="translate(1478.00,209.40) scale(1.0)" ><path d="M-6.8,-3.4 H-3.4 L-2.2,-5.6 H2.2 L3.4,-3.4 H6.8 V5.6 H-6.8 Z" fill="#e8e8e8"/><circle cx="0" cy="0.8" r="3.7" fill="none" stroke="#282828" stroke-width="1"/><circle cx="0" cy="0.8" r="1.8" fill="none" stroke="#282828" stroke-width="0.95"/></g>
<path d="M1294.20,226.30 L1300.00,229.50 L1294.20,232.70 Z" fill="#d8d8d8"/>
<g transform="translate(1317.00,228.60) scale(1.0)" ><path d="M-2.8,3.8 C-2.8,2.4 -5.8,1.2 -5.8,-2 A5.8,5.8 0 0 1 5.8,-2 C5.8,1.2 2.8,2.4 2.8,3.8 Z" fill="#e59b54"/><path d="M-3,-1.8 L-1.5,-0.6 L0,-1.8 L1.5,-0.6 L3,-1.8 M-1.5,-0.6 V2.6 M1.5,-0.6 V2.6" fill="none" stroke="#282828" stroke-width="1"/><rect x="-2.8" y="4.7" width="5.6" height="1.2" fill="#e59b54"/><rect x="-1.8" y="6.7" width="3.6" height="1.1" fill="#e59b54"/></g>
<text x="1331.30" y="234.30" font-size="12" fill="#dcdcdc" textLength="25.60" lengthAdjust="spacingAndGlyphs" >Light</text>
<g transform="translate(1386.50,229.00) scale(1.0)" ><circle cx="0" cy="-0.6" r="6.2" fill="none" stroke="#1fc7a0" stroke-width="1.15"/><circle cx="0" cy="-0.4" r="1.2" fill="#1fc7a0"/><path d="M0,1 V8" stroke="#1fc7a0" stroke-width="1.1" stroke-dasharray="2.6 1.2"/></g>
<g transform="translate(1458.00,229.30) scale(1.0)" ><path d="M-6.8,0 C-3.6,-5.6 3.6,-5.6 6.8,0 C3.6,5.4 -3.6,5.4 -6.8,0 Z" fill="#e8e8e8"/><circle cx="0" cy="-0.2" r="2.7" fill="#2b2b2b"/><circle cx="0" cy="-0.2" r="1.25" fill="#e8e8e8"/></g>
<g transform="translate(1478.00,229.40) scale(1.0)" ><path d="M-6.8,-3.4 H-3.4 L-2.2,-5.6 H2.2 L3.4,-3.4 H6.8 V5.6 H-6.8 Z" fill="#e8e8e8"/><circle cx="0" cy="0.8" r="3.7" fill="none" stroke="#2b2b2b" stroke-width="1"/><circle cx="0" cy="0.8" r="1.8" fill="none" stroke="#2b2b2b" stroke-width="0.95"/></g>
<path d="M1294.20,246.30 L1300.00,249.50 L1294.20,252.70 Z" fill="#777"/>
<g transform="translate(1317.00,249.10) scale(1.0)" ><path d="M-5.3,-5.1 H5.3 L0,5.5 Z" fill="none" stroke="#8c6038" stroke-width="3.1" stroke-linejoin="round"/></g>
<text x="1331.30" y="254.30" font-size="12" fill="#8c8c8c" textLength="28.70" lengthAdjust="spacingAndGlyphs" >Plane</text>
<g transform="translate(1390.00,249.40) scale(1.0)" ><path d="M-5,-4.8 H5 L0,5.2 Z" fill="none" stroke="#1d8a72" stroke-width="1.15" stroke-linejoin="round"/><rect x="-6.7" y="-6.5" width="3.3" height="3.3" rx="0.4" fill="#282828" stroke="#1d8a72" stroke-width="1"/><rect x="3.4" y="-6.5" width="3.3" height="3.3" rx="0.4" fill="#282828" stroke="#1d8a72" stroke-width="1"/><rect x="-1.65" y="3.5" width="3.3" height="3.3" rx="0.4" fill="#282828" stroke="#1d8a72" stroke-width="1"/></g>
<g transform="translate(1458.00,249.80) scale(1.0)" ><path d="M-6,-1.4 C-3,3.4 3,3.4 6,-1.4" fill="none" stroke="#bdbdbd" stroke-width="1.05" stroke-linecap="round"/></g>
<g transform="translate(1478.00,249.40) scale(1.0)" ><path d="M-6.8,-3.4 H-3.4 L-2.2,-5.6 H2.2 L3.4,-3.4 H6.8 V5.6 H-6.8 Z" fill="#e8e8e8"/><circle cx="0" cy="0.8" r="3.7" fill="none" stroke="#282828" stroke-width="1"/><circle cx="0" cy="0.8" r="1.8" fill="none" stroke="#282828" stroke-width="0.95"/></g>
</g>
<g clip-path="url(#pclip)">
<rect x="1247.60" y="304.70" width="247.60" height="525.10" fill="#303030" />
<rect x="1247.60" y="329.70" width="27.90" height="500.10" fill="#1b1b1b" />
<path d="M1253.60,330.00 H1275.50 V365.60 H1253.60 A4,4 0 0 1 1249.60,361.60 V334.00 A4,4 0 0 1 1253.60,330.00 Z" fill="#1e1e1e" />
<path d="M1253.60,372.50 H1275.50 V514.00 H1253.60 A4,4 0 0 1 1249.60,510.00 V376.50 A4,4 0 0 1 1253.60,372.50 Z" fill="#1e1e1e" />
<path d="M1253.60,521.50 H1275.50 V550.50 H1253.60 A4,4 0 0 1 1249.60,546.50 V525.50 A4,4 0 0 1 1253.60,521.50 Z" fill="#1e1e1e" />
<path d="M1253.60,557.50 H1275.50 V753.50 H1253.60 A4,4 0 0 1 1249.60,749.50 V561.50 A4,4 0 0 1 1253.60,557.50 Z" fill="#1e1e1e" />
<path d="M1253.60,760.50 H1275.50 V790.00 H1253.60 A4,4 0 0 1 1249.60,786.00 V764.50 A4,4 0 0 1 1253.60,760.50 Z" fill="#1e1e1e" />
<path d="M1253.60,586.60 H1275.50 V612.40 H1253.60 A4,4 0 0 1 1249.60,608.40 V590.60 A4,4 0 0 1 1253.60,586.60 Z" fill="#303030" />
<g transform="translate(1262.30,351.20) scale(1.0)" ><path d="M-4,-7 V-1.4" stroke="#b8b8b8" stroke-width="1.3"/><rect x="-5.8" y="-0.6" width="3.6" height="7.4" rx="1.7" fill="#b8b8b8"/><path d="M1.8,-6.6 V-3.4 A2.6,2.6 0 0 0 3.2,-1.2 V6.2 A1.2,1.2 0 0 0 5.6,6.2 V-1.2 A2.6,2.6 0 0 0 7,-3.4 V-6.6 L5.6,-6.6 V-3.6 H3.2 V-6.6 Z" fill="#b8b8b8"/></g>
<g transform="translate(1262.30,387.00) scale(1.0)" ><rect x="-6.6" y="-3" width="11.2" height="9" rx="0.8" fill="none" stroke="#c4c4c4" stroke-width="1.3"/><path d="M-3.6,-3 V-5.4 H1.6 V-3" fill="none" stroke="#c4c4c4" stroke-width="1.2"/><path d="M6.8,-4.8 V6" stroke="#c4c4c4" stroke-width="1.4"/><path d="M4,-5.6 L5.8,-3.6" stroke="#c4c4c4" stroke-width="1"/><rect x="5" y="0.6" width="1.6" height="1.6" fill="#c4c4c4"/><rect x="5" y="3.4" width="1.6" height="1.6" fill="#c4c4c4"/></g>
<g transform="translate(1262.30,415.80) scale(1.0)" ><path d="M-7,-6.6 H7 V-1.4 H4.4 V-3 H-4.4 V-1.4 H-7 Z" fill="#c8c8c8"/><rect x="-4.2" y="-2.2" width="8.4" height="8.8" fill="#999999"/><path d="M-2.6,5 L-0.2,1.4 L2.2,5 Z" fill="#1d1d1d"/><circle cx="1.8" cy="0" r="0.8" fill="#1d1d1d"/></g>
<g transform="translate(1262.30,443.50) scale(1.0)" ><path d="M-6.8,-1.6 V6.8 H2.6" fill="none" stroke="#c4c4c4" stroke-width="1.1" stroke-opacity="0.6"/><path d="M-4.8,-3.6 V4.8 H4.6" fill="none" stroke="#c4c4c4" stroke-width="1.1" stroke-opacity="0.8"/><rect x="-2.8" y="-6.8" width="9.6" height="9.6" rx="0.6" fill="#c4c4c4"/><path d="M-1.8,1.8 L1.4,-2.8 L3.4,-0.2 L4.4,-1.6 L5.8,1.8 Z" fill="#222"/><circle cx="4.6" cy="-4.6" r="0.9" fill="#222"/></g>
<g transform="translate(1262.30,471.60) scale(1.0)" ><path d="M-6.4,4.6 L-2.6,-6.6 L0.2,0.6 A4.4,4.4 0 0 0 -1.8,4.6 Z" fill="#c4c4c4"/><circle cx="4.6" cy="-4.2" r="2.1" fill="#c4c4c4"/><circle cx="2.7" cy="3" r="3.7" fill="none" stroke="#c4c4c4" stroke-width="1.2"/><path d="M0.6,3.2 A2.2,2.2 0 0 1 2.6,0.9" fill="none" stroke="#c4c4c4" stroke-width="0.9"/></g>
<g transform="translate(1262.30,499.60) scale(1.0)" ><circle r="6.1" fill="none" stroke="#d65f6c" stroke-width="1.3"/><path d="M-4.6,-3 C-2.6,-5.4 0.6,-5.8 1.4,-4.4 C0.4,-3 1.6,-2 0.4,-0.8 C-0.8,-0.4 -1.6,0.6 -3,0.2 C-4.2,-0.6 -4.8,-1.6 -4.6,-3 Z M0.6,1.6 C2,0.8 3.6,1.2 4.4,2.6 C3.8,4.2 2.4,5 1,4.6 C0.2,3.6 0,2.6 0.6,1.6 Z" fill="#d65f6c"/><path d="M-6.8,6.4 L-4.6,4.4" stroke="#d65f6c" stroke-width="1.2"/></g>
<g transform="translate(1262.30,536.20) scale(1.0)" ><rect x="-6.6" y="-6.2" width="13.2" height="3.4" fill="none" stroke="#c8c8c8" stroke-width="1.2"/><path d="M-5.4,-2.8 V6.2 H5.4 V-2.8" fill="none" stroke="#c8c8c8" stroke-width="1.2"/><rect x="-2" y="-0.6" width="4" height="1.8" fill="#c8c8c8"/></g>
<g transform="translate(1262.30,571.40) scale(1.0)" ><rect x="-4.2" y="-4.2" width="8.4" height="8.4" fill="#e08f4a"/><path d="M-7,-3.6 V-7 H-3.6 M3.6,-7 H7 V-3.6 M7,3.6 V7 H3.6 M-3.6,7 H-7 V3.6" stroke="#8a5a30" stroke-width="1.2" fill="none" stroke-linejoin="round"/></g>
<g transform="translate(1262.70,599.60) scale(1.08)" ><path d="M6.6,-4.6 A4.6,4.6 0 0 1 0.6,0.4 L-4.2,5.6 A1.7,1.7 0 0 1 -6.6,3.2 L-1.4,-1.6 A4.6,4.6 0 0 1 3.6,-7.4 L1,-4.6 L1.6,-2.6 L3.6,-2 Z" fill="#6d96ec" stroke="#6d96ec" stroke-width="0.6" stroke-linejoin="round"/></g>
<g transform="translate(1262.30,627.40) scale(1.0)" ><path d="M-4.8,-4.6 H5 M-4.8,-4.6 V5.4 M-4.8,-4.6 L4.6,4.8" stroke="#6d96ec" stroke-width="1.1"/><circle cx="-4.8" cy="-4.6" r="2.3" fill="#6d96ec"/><circle cx="5" cy="-4.6" r="1.5" fill="#6d96ec"/><circle cx="-4.8" cy="5.4" r="1.3" fill="#6d96ec"/><circle cx="4.8" cy="5" r="1.9" fill="#6d96ec"/></g>
<g transform="translate(1262.30,655.60) scale(1.0)" ><path d="M3.4,5.6 A6.6,6.6 0 1 1 5.4,-3.6" fill="none" stroke="#6d96ec" stroke-width="1.2" stroke-linecap="round"/><circle cx="-0.6" cy="0.4" r="2.9" fill="#6d96ec"/><circle cx="5" cy="-5.4" r="1.6" fill="#6d96ec"/></g>
<g transform="translate(1262.30,683.40) scale(1.0)" ><path d="M-6.4,2 C-6.4,-1 -4,-3 -1.4,-3.6 L3.6,-6.6 C5.8,-7.4 7.4,-5.6 6.6,-3.6 L3.4,3.6 C2.2,6.2 -0.6,7.2 -3,6.4 C-5.2,5.6 -6.4,4 -6.4,2 Z" fill="none" stroke="#6d96ec" stroke-width="1.15"/><circle cx="-1.6" cy="1.6" r="2.9" fill="none" stroke="#6d96ec" stroke-width="1.1"/><circle cx="-1.6" cy="1.6" r="1.1" fill="#6d96ec"/><circle cx="4.6" cy="-4.4" r="0.8" fill="#6d96ec"/></g>
<g transform="translate(1262.30,711.30) scale(1.0)" ><path d="M-5,-4.8 H5 L0,5.2 Z" fill="none" stroke="#1fc7a0" stroke-width="1.15" stroke-linejoin="round"/><rect x="-6.7" y="-6.5" width="3.3" height="3.3" rx="0.4" fill="#232323" stroke="#1fc7a0" stroke-width="1"/><rect x="3.4" y="-6.5" width="3.3" height="3.3" rx="0.4" fill="#232323" stroke="#1fc7a0" stroke-width="1"/><rect x="-1.65" y="3.5" width="3.3" height="3.3" rx="0.4" fill="#232323" stroke="#1fc7a0" stroke-width="1"/></g>
<g transform="translate(1262.30,739.40) scale(1.0)" ><circle r="6.1" fill="none" stroke="#d65f6c" stroke-width="1.2"/><path d="M0,-6.1 A6.1,6.1 0 0 0 -6.1,0 H0 Z" fill="#d65f6c"/><path d="M0,0 H6.1 A6.1,6.1 0 0 1 0,6.1 Z" fill="#d65f6c"/><path d="M0,0 H-6.1 A6.1,6.1 0 0 0 0,6.1 Z" fill="#d65f6c" fill-opacity="0.35"/></g>
<g transform="translate(1262.30,775.40) scale(1.0)" ><rect x="-6.5" y="-6.5" width="13" height="13" fill="#d65f6c" fill-opacity="0.22"/><rect x="-6.50" y="-6.50" width="2.60" height="2.60" fill="#d65f6c"/><rect x="-6.50" y="-1.30" width="2.60" height="2.60" fill="#d65f6c"/><rect x="-6.50" y="3.90" width="2.60" height="2.60" fill="#d65f6c"/><rect x="-3.90" y="-3.90" width="2.60" height="2.60" fill="#d65f6c"/><rect x="-3.90" y="1.30" width="2.60" height="2.60" fill="#d65f6c"/><rect x="-1.30" y="-6.50" width="2.60" height="2.60" fill="#d65f6c"/><rect x="-1.30" y="-1.30" width="2.60" height="2.60" fill="#d65f6c"/><rect x="-1.30" y="3.90" width="2.60" height="2.60" fill="#d65f6c"/><rect x="1.30" y="-3.90" width="2.60" height="2.60" fill="#d65f6c"/><rect x="1.30" y="1.30" width="2.60" height="2.60" fill="#d65f6c"/><rect x="3.90" y="-6.50" width="2.60" height="2.60" fill="#d65f6c"/><rect x="3.90" y="-1.30" width="2.60" height="2.60" fill="#d65f6c"/><rect x="3.90" y="3.90" width="2.60" height="2.60" fill="#d65f6c"/></g>
<rect x="1255.60" y="306.90" width="31.10" height="19.00" fill="#2a2a2a" rx="4" stroke="#3d3d3d" stroke-width="1" />
<g transform="translate(1267.00,316.40) scale(1.0)" ><rect x="-6.8" y="-6.6" width="13.6" height="5.6" rx="2.8" fill="#e4e4e4"/><rect x="-6.8" y="1" width="13.6" height="5.6" rx="2.8" fill="#e4e4e4"/><rect x="-1" y="-5.2" width="6.4" height="2.8" rx="1.4" fill="#2b2b2b"/><rect x="-5.4" y="2.4" width="6.4" height="2.8" rx="1.4" fill="#2b2b2b"/></g>
<path d="M1277.30,315.45 L1280.20,318.55 L1283.10,315.45" fill="none" stroke="#e0e0e0" stroke-width="1.25" stroke-linecap="round" stroke-linejoin="round"/>
<rect x="1314.60" y="306.90" width="115.30" height="19.00" fill="#1d1d1d" rx="4" stroke="#3d3d3d" stroke-width="1" />
<g transform="translate(1326.40,316.60) scale(1.0)" ><circle cx="2" cy="-2" r="4.3" fill="none" stroke="#d8d8d8" stroke-width="1.2"/><path d="M-1.1,1.1 L-6.6,6.6" stroke="#d8d8d8" stroke-width="1.4" stroke-linecap="round"/></g>
<rect x="1467.70" y="306.90" width="19.20" height="19.00" fill="#2a2a2a" rx="4" stroke="#3d3d3d" stroke-width="1" />
<path d="M1474.40,315.45 L1477.30,318.55 L1480.20,315.45" fill="none" stroke="#e0e0e0" stroke-width="1.25" stroke-linecap="round" stroke-linejoin="round"/>
<g transform="translate(1293.40,347.30) scale(1.0)" ><rect x="-4.1" y="-4.1" width="8.2" height="8.2" fill="#e4e4e4"/><path d="M-6.6,-3.4 V-6.6 H-3.4 M3.4,-6.6 H6.6 V-3.4 M6.6,3.4 V6.6 H3.4 M-3.4,6.6 H-6.6 V3.4" stroke="#e4e4e4" stroke-width="1.1" fill="none" stroke-linejoin="round"/></g>
<text x="1310.00" y="351.20" font-size="12" fill="#dcdcdc" textLength="21.30" lengthAdjust="spacingAndGlyphs" >Do...</text>
<path d="M1344.60,343.10 L1349.00,347.40 L1344.60,351.70" fill="none" stroke="#d8d8d8" stroke-width="1.2" stroke-linecap="round" stroke-linejoin="round"/>
<g transform="translate(1366.30,347.30) scale(1.0)" ><rect x="-5.4" y="-7" width="8.2" height="5.8" rx="1.3" fill="#e4e4e4"/><rect x="-7" y="1.2" width="8.2" height="5.8" rx="1.3" fill="#e4e4e4"/><rect x="-4.6" y="-4.2" width="6.6" height="2.2" rx="0.8" fill="#9c9c9c"/><rect x="-6.2" y="4" width="6.6" height="2.2" rx="0.8" fill="#9c9c9c"/><path d="M3.2,-4.6 H4.2 A2.6,2.6 0 0 1 6.8,-2 V2.4 A2.6,2.6 0 0 1 4.2,5 H2" fill="none" stroke="#e4e4e4" stroke-width="1.1"/><path d="M3.4,3.6 L1.6,5 L3.4,6.4 Z" fill="#e4e4e4"/></g>
<text x="1382.60" y="351.20" font-size="12" fill="#dcdcdc" textLength="68.60" lengthAdjust="spacingAndGlyphs" >GeometryN...</text>
<g transform="translate(1477.60,347.20) scale(1.0)" ><g transform="rotate(45) translate(0,-1.2)"><path d="M-3.2,-6.8 H3.2 V-5.2 H2.1 V-1.4 L4.4,1.2 V2.4 H-4.4 V1.2 L-2.1,-1.4 V-5.2 H-3.2 Z" fill="none" stroke="#d0d0d0" stroke-width="1.05" stroke-linejoin="round"/><path d="M0,2.4 V8.6" stroke="#d0d0d0" stroke-width="1.1" stroke-linecap="round"/></g></g>
<rect x="1284.10" y="374.10" width="203.10" height="18.50" fill="#282828" rx="4" stroke="#3d3d3d" stroke-width="1" />
<text x="1291.80" y="386.90" font-size="12" fill="#ececec" textLength="65.80" lengthAdjust="spacingAndGlyphs" >Add Modifier</text>
<path d="M1477.50,382.30 L1480.60,385.70 L1483.70,382.30" fill="none" stroke="#e0e0e0" stroke-width="1.25" stroke-linecap="round" stroke-linejoin="round"/>
<rect x="1284.10" y="403.20" width="203.30" height="155.50" fill="#3d3d3d" rx="4" />
<path d="M1291.90,414.50 L1296.00,418.70 L1300.10,414.50" fill="none" stroke="#d8d8d8" stroke-width="1.2" stroke-linecap="round" stroke-linejoin="round"/>
<g transform="translate(1313.40,416.20) scale(1.0)" ><rect x="-7" y="-7" width="14" height="14" rx="1.2" fill="#4a4a4a" stroke="#7a7a7a" stroke-width="1"/><circle r="4.6" fill="none" stroke="#dcdcdc" stroke-width="1.25"/></g>
<path d="M1342.90,407.30 H1357.60 V425.10 H1342.90 A4,4 0 0 1 1338.90,421.10 V411.30 A4,4 0 0 1 1342.90,407.30 Z" fill="#545454" />
<rect x="1358.10" y="407.30" width="18.70" height="17.80" fill="#4772b3" />
<rect x="1377.50" y="407.30" width="18.90" height="17.80" fill="#4772b3" />
<rect x="1397.10" y="407.30" width="19.30" height="17.80" fill="#4772b3" />
<path d="M1417.00,407.30 H1432.40 A4,4 0 0 1 1436.40,411.30 V421.10 A4,4 0 0 1 1432.40,425.10 H1417.00 V407.30 Z" fill="#222222" />
<g transform="translate(1348.20,416.20) scale(1.0)" ><path d="M-5,-4.6 H5 L0,5.2 Z" fill="none" stroke="#e8e8e8" stroke-width="1.15" stroke-linejoin="round"/><circle cx="-5" cy="-4.6" r="1.7" fill="#545454" stroke="#e8e8e8" stroke-width="1"/><circle cx="5" cy="-4.6" r="1.7" fill="#545454" stroke="#e8e8e8" stroke-width="1"/><circle cx="0" cy="5.2" r="1.7" fill="#545454" stroke="#e8e8e8" stroke-width="1"/></g>
<g transform="translate(1367.50,416.20) scale(1.0)" ><path d="M-3.4,-4.8 H2 M-5,-3.2 V3.4 M-3.4,5 H3 M4.6,-2.4 V3.4" fill="none" stroke="#f2f2f2" stroke-width="0.95"/><rect x="-6.4" y="3.6" width="2.8" height="2.8" rx="0.7" fill="#4772b3" stroke="#f2f2f2" stroke-width="0.9"/><rect x="3.2" y="3.6" width="2.8" height="2.8" rx="0.7" fill="#4772b3" stroke="#f2f2f2" stroke-width="0.9"/><rect x="-6.4" y="-6.2" width="2.8" height="2.8" rx="0.7" fill="#4772b3" stroke="#f2f2f2" stroke-width="0.9"/><rect x="2.2" y="-7" width="4.8" height="4.6" fill="#f2f2f2"/></g>
<g transform="translate(1387.00,416.20) scale(1.0)" ><rect x="-6.8" y="-5.8" width="13.6" height="9.6" rx="1" fill="#f2f2f2"/><rect x="-5.3" y="-4.3" width="10.6" height="6.6" fill="none" stroke="#4772b3" stroke-width="0.9"/><path d="M0,3.8 V6 M-3.2,6.3 H3.2" stroke="#f2f2f2" stroke-width="1.3"/></g>
<g transform="translate(1406.80,416.00) scale(1.0)" ><path d="M-6.8,-3.4 H-3.4 L-2.2,-5.6 H2.2 L3.4,-3.4 H6.8 V5.6 H-6.8 Z" fill="#f2f2f2"/><circle cx="0" cy="0.8" r="3.7" fill="none" stroke="#4772b3" stroke-width="1"/><circle cx="0" cy="0.8" r="1.8" fill="none" stroke="#4772b3" stroke-width="0.95"/></g>
<path d="M1423.20,415.00 L1426.70,418.60 L1430.20,415.00" fill="none" stroke="#e8e8e8" stroke-width="1.3" stroke-linecap="round" stroke-linejoin="round"/>
<path d="M1443.70,412.30 L1451.50,420.10 M1451.50,412.30 L1443.70,420.10" stroke="#e0e0e0" stroke-width="1.2" fill="none" stroke-linecap="round"/>
<rect x="1470.35" y="412.45" width="1.5" height="1.5" fill="#727272"/><rect x="1473.40" y="412.45" width="1.5" height="1.5" fill="#727272"/><rect x="1476.45" y="412.45" width="1.5" height="1.5" fill="#727272"/><rect x="1479.50" y="412.45" width="1.5" height="1.5" fill="#727272"/><rect x="1470.35" y="416.45" width="1.5" height="1.5" fill="#727272"/><rect x="1473.40" y="416.45" width="1.5" height="1.5" fill="#727272"/><rect x="1476.45" y="416.45" width="1.5" height="1.5" fill="#727272"/><rect x="1479.50" y="416.45" width="1.5" height="1.5" fill="#727272"/>
<path d="M1296.00,437.50 H1384.80 V455.70 H1296.00 A3.5,3.5 0 0 1 1292.50,452.20 V441.00 A3.5,3.5 0 0 1 1296.00,437.50 Z" fill="#4772b3" />
<path d="M1385.50,437.50 H1475.20 A3.5,3.5 0 0 1 1478.70,441.00 V452.20 A3.5,3.5 0 0 1 1475.20,455.70 H1385.50 V437.50 Z" fill="#545454" />
<text x="1302.30" y="450.40" font-size="12" fill="#ffffff" textLength="71.50" lengthAdjust="spacingAndGlyphs" >Catmull-Clark</text>
<text x="1413.70" y="450.40" font-size="12" fill="#dcdcdc" textLength="35.40" lengthAdjust="spacingAndGlyphs" >Simple</text>
<text x="1293.00" y="475.60" font-size="12" fill="#dcdcdc" textLength="61.20" lengthAdjust="spacingAndGlyphs" >Levels Vie...</text>
<path d="M1367.90,462.50 H1455.00 A3.5,3.5 0 0 1 1458.50,466.00 V480.40 H1364.40 V466.00 A3.5,3.5 0 0 1 1367.90,462.50 Z" fill="#545454" />
<text x="1411.40" y="475.40" font-size="12" fill="#dcdcdc" text-anchor="middle" >1</text>
<circle cx="1469.70" cy="471.40" r="2.30" fill="#e6e6e6" />
<text x="1316.80" y="495.40" font-size="12" fill="#dcdcdc" textLength="37.10" lengthAdjust="spacingAndGlyphs" >Render</text>
<path d="M1364.40,481.50 H1458.50 V497.00 A3.5,3.5 0 0 1 1455.00,500.50 H1367.90 A3.5,3.5 0 0 1 1364.40,497.00 V481.50 Z" fill="#545454" />
<text x="1411.40" y="495.20" font-size="12" fill="#dcdcdc" text-anchor="middle" >2</text>
<circle cx="1469.70" cy="491.30" r="2.30" fill="#e6e6e6" />
<rect x="1364.40" y="510.20" width="12.40" height="12.40" fill="#4772b3" rx="2.6" />
<path d="M1367.4,516.6 L1369.8,519.2 L1374,513.4" fill="none" stroke="#ffffff" stroke-width="1.7" stroke-linecap="round" stroke-linejoin="round"/>
<text x="1381.40" y="520.20" font-size="12" fill="#dcdcdc" textLength="68.60" lengthAdjust="spacingAndGlyphs" >Optimal Dis...</text>
<circle cx="1469.70" cy="516.50" r="2.30" fill="#e6e6e6" />
<path d="M1308.90,542.70 L1313.30,547.00 L1308.90,551.30" fill="none" stroke="#d0d0d0" stroke-width="1.2" stroke-linecap="round" stroke-linejoin="round"/>
<text x="1319.90" y="550.80" font-size="12" fill="#dcdcdc" textLength="52.20" lengthAdjust="spacingAndGlyphs" >Advanced</text>
<rect x="1284.40" y="561.90" width="202.70" height="85.10" fill="#3d3d3d" rx="4" stroke="#4772b3" stroke-width="1.1" />
<path d="M1291.90,572.90 L1296.00,577.10 L1300.10,572.90" fill="none" stroke="#d8d8d8" stroke-width="1.2" stroke-linecap="round" stroke-linejoin="round"/>
<g transform="translate(1313.40,574.60) scale(1.0)" ><rect x="-5.4" y="-7" width="8.2" height="5.8" rx="1.3" fill="#e4e4e4"/><rect x="-7" y="1.2" width="8.2" height="5.8" rx="1.3" fill="#e4e4e4"/><rect x="-4.6" y="-4.2" width="6.6" height="2.2" rx="0.8" fill="#9c9c9c"/><rect x="-6.2" y="4" width="6.6" height="2.2" rx="0.8" fill="#9c9c9c"/><path d="M3.2,-4.6 H4.2 A2.6,2.6 0 0 1 6.8,-2 V2.4 A2.6,2.6 0 0 1 4.2,5 H2" fill="none" stroke="#e4e4e4" stroke-width="1.1"/><path d="M3.4,3.6 L1.6,5 L3.4,6.4 Z" fill="#e4e4e4"/></g>
<path d="M1342.90,565.70 H1357.60 V583.50 H1342.90 A4,4 0 0 1 1338.90,579.50 V569.70 A4,4 0 0 1 1342.90,565.70 Z" fill="#545454" />
<rect x="1358.10" y="565.70" width="18.70" height="17.80" fill="#4772b3" />
<rect x="1377.50" y="565.70" width="18.90" height="17.80" fill="#4772b3" />
<rect x="1397.10" y="565.70" width="19.30" height="17.80" fill="#4772b3" />
<path d="M1417.00,565.70 H1432.40 A4,4 0 0 1 1436.40,569.70 V579.50 A4,4 0 0 1 1432.40,583.50 H1417.00 V565.70 Z" fill="#222222" />
<g transform="translate(1348.20,574.60) scale(1.0)" ><path d="M-5,-4.6 H5 L0,5.2 Z" fill="none" stroke="#e8e8e8" stroke-width="1.15" stroke-linejoin="round"/><circle cx="-5" cy="-4.6" r="1.7" fill="#545454" stroke="#e8e8e8" stroke-width="1"/><circle cx="5" cy="-4.6" r="1.7" fill="#545454" stroke="#e8e8e8" stroke-width="1"/><circle cx="0" cy="5.2" r="1.7" fill="#545454" stroke="#e8e8e8" stroke-width="1"/></g>
<g transform="translate(1367.50,574.60) scale(1.0)" ><path d="M-3.4,-4.8 H2 M-5,-3.2 V3.4 M-3.4,5 H3 M4.6,-2.4 V3.4" fill="none" stroke="#f2f2f2" stroke-width="0.95"/><rect x="-6.4" y="3.6" width="2.8" height="2.8" rx="0.7" fill="#4772b3" stroke="#f2f2f2" stroke-width="0.9"/><rect x="3.2" y="3.6" width="2.8" height="2.8" rx="0.7" fill="#4772b3" stroke="#f2f2f2" stroke-width="0.9"/><rect x="-6.4" y="-6.2" width="2.8" height="2.8" rx="0.7" fill="#4772b3" stroke="#f2f2f2" stroke-width="0.9"/><rect x="2.2" y="-7" width="4.8" height="4.6" fill="#f2f2f2"/></g>
<g transform="translate(1387.00,574.60) scale(1.0)" ><rect x="-6.8" y="-5.8" width="13.6" height="9.6" rx="1" fill="#f2f2f2"/><rect x="-5.3" y="-4.3" width="10.6" height="6.6" fill="none" stroke="#4772b3" stroke-width="0.9"/><path d="M0,3.8 V6 M-3.2,6.3 H3.2" stroke="#f2f2f2" stroke-width="1.3"/></g>
<g transform="translate(1406.80,574.40) scale(1.0)" ><path d="M-6.8,-3.4 H-3.4 L-2.2,-5.6 H2.2 L3.4,-3.4 H6.8 V5.6 H-6.8 Z" fill="#f2f2f2"/><circle cx="0" cy="0.8" r="3.7" fill="none" stroke="#4772b3" stroke-width="1"/><circle cx="0" cy="0.8" r="1.8" fill="none" stroke="#4772b3" stroke-width="0.95"/></g>
<path d="M1423.20,573.40 L1426.70,577.00 L1430.20,573.40" fill="none" stroke="#e8e8e8" stroke-width="1.3" stroke-linecap="round" stroke-linejoin="round"/>
<path d="M1443.70,570.70 L1451.50,578.50 M1451.50,570.70 L1443.70,578.50" stroke="#e0e0e0" stroke-width="1.2" fill="none" stroke-linecap="round"/>
<rect x="1470.35" y="570.85" width="1.5" height="1.5" fill="#727272"/><rect x="1473.40" y="570.85" width="1.5" height="1.5" fill="#727272"/><rect x="1476.45" y="570.85" width="1.5" height="1.5" fill="#727272"/><rect x="1479.50" y="570.85" width="1.5" height="1.5" fill="#727272"/><rect x="1470.35" y="574.85" width="1.5" height="1.5" fill="#727272"/><rect x="1473.40" y="574.85" width="1.5" height="1.5" fill="#727272"/><rect x="1476.45" y="574.85" width="1.5" height="1.5" fill="#727272"/><rect x="1479.50" y="574.85" width="1.5" height="1.5" fill="#727272"/>
<path d="M1297.00,595.60 H1322.60 V612.80 H1297.00 A4,4 0 0 1 1293.00,608.80 V599.60 A4,4 0 0 1 1297.00,595.60 Z" fill="#2b2b2b" />
<g transform="translate(1303.60,604.20) scale(1.0)" ><rect x="-5.4" y="-7" width="8.2" height="5.8" rx="1.3" fill="#e4e4e4"/><rect x="-7" y="1.2" width="8.2" height="5.8" rx="1.3" fill="#e4e4e4"/><rect x="-4.6" y="-4.2" width="6.6" height="2.2" rx="0.8" fill="#9c9c9c"/><rect x="-6.2" y="4" width="6.6" height="2.2" rx="0.8" fill="#9c9c9c"/><path d="M3.2,-4.6 H4.2 A2.6,2.6 0 0 1 6.8,-2 V2.4 A2.6,2.6 0 0 1 4.2,5 H2" fill="none" stroke="#e4e4e4" stroke-width="1.1"/><path d="M3.4,3.6 L1.6,5 L3.4,6.4 Z" fill="#e4e4e4"/></g>
<path d="M1313.70,603.25 L1316.60,606.35 L1319.50,603.25" fill="none" stroke="#e0e0e0" stroke-width="1.25" stroke-linecap="round" stroke-linejoin="round"/>
<rect x="1323.60" y="595.60" width="94.70" height="17.20" fill="#1d1d1d" />
<text x="1330.70" y="608.10" font-size="12" fill="#dcdcdc" textLength="78.80" lengthAdjust="spacingAndGlyphs" >Geometry No...</text>
<rect x="1418.90" y="595.60" width="19.50" height="17.20" fill="#545454" />
<g transform="translate(1428.60,604.20) scale(1.0)" ><path d="M0,-6.3 C2,-5.3 4,-4.9 5.6,-4.9 C5.6,0.6 4.2,4.2 0,6.6 C-4.2,4.2 -5.6,0.6 -5.6,-4.9 C-4,-4.9 -2,-5.3 0,-6.3 Z" fill="none" stroke="#c8c8c8" stroke-width="1.1" stroke-linejoin="round"/></g>
<rect x="1439.20" y="595.60" width="19.40" height="17.20" fill="#545454" />
<g transform="translate(1448.80,604.20) scale(1.0)" ><path d="M-2.2,-3.2 V-6.2 H3.2 L6.2,-3.2 V3.6 H2.2" fill="none" stroke="#e4e4e4" stroke-width="1.25" stroke-linejoin="round"/><path d="M3,-6.2 V-3 H6.2 Z" fill="#e4e4e4"/><path d="M-6,-3 H2 V6.3 H-6 Z" fill="none" stroke="#e4e4e4" stroke-width="1.25" stroke-linejoin="round"/></g>
<path d="M1459.40,595.60 H1474.40 A4,4 0 0 1 1478.40,599.60 V608.80 A4,4 0 0 1 1474.40,612.80 H1459.40 V595.60 Z" fill="#545454" />
<path d="M1465.20,600.40 L1472.80,608.00 M1472.80,600.40 L1465.20,608.00" stroke="#e8e8e8" stroke-width="1.2" fill="none" stroke-linecap="round"/>
<path d="M1308.90,630.80 L1313.30,635.10 L1308.90,639.40" fill="none" stroke="#d0d0d0" stroke-width="1.2" stroke-linecap="round" stroke-linejoin="round"/>
<text x="1319.90" y="639.20" font-size="12" fill="#dcdcdc" textLength="91.00" lengthAdjust="spacingAndGlyphs" >Output Attributes</text>
</g>
<rect x="56.00" y="832.20" width="1440.00" height="19.30" fill="#1d1d1d" />
<g transform="translate(73.70,841.30) scale(1.0)" ><rect x="-4.6" y="-6.5" width="9.2" height="13" rx="3.2" fill="none" stroke="#d0d0d0" stroke-width="1.1"/><path d="M-4.6,-0.5 V-3.3 A3.2,3.2 0 0 1 -1.4,-6.5 H0 V-0.5 Z" fill="#d0d0d0"/></g>
<text x="90.60" y="844.30" font-size="12" fill="#a0a0a0" textLength="47.20" lengthAdjust="spacingAndGlyphs" >Pan View</text>
<g transform="translate(318.00,841.30) scale(1.0)" ><rect x="-4.6" y="-6.5" width="9.2" height="13" rx="3.2" fill="none" stroke="#d0d0d0" stroke-width="1.1"/><rect x="-1.5" y="-4.8" width="3" height="5.6" rx="1.4" fill="#d0d0d0"/></g>
<g transform="translate(562.60,841.30) scale(1.0)" ><rect x="-4.6" y="-6.5" width="9.2" height="13" rx="3.2" fill="none" stroke="#d0d0d0" stroke-width="1.1"/><path d="M4.6,-0.5 V-3.3 A3.2,3.2 0 0 0 1.4,-6.5 H0 V-0.5 Z" fill="#d0d0d0"/></g>
<text x="1459.50" y="844.20" font-size="12.2" fill="#9a9a9a" textLength="27.10" lengthAdjust="spacingAndGlyphs" >3.0.0</text>
</g>
<path d="M56.5,66 V841.5 A9.5,9.5 0 0 0 66,851.0 H1486 A9.5,9.5 0 0 0 1495.5,841.5 V66" fill="none" stroke="#3a3a3a" stroke-width="1" stroke-opacity="0.8"/>
</svg>
</body></html>
